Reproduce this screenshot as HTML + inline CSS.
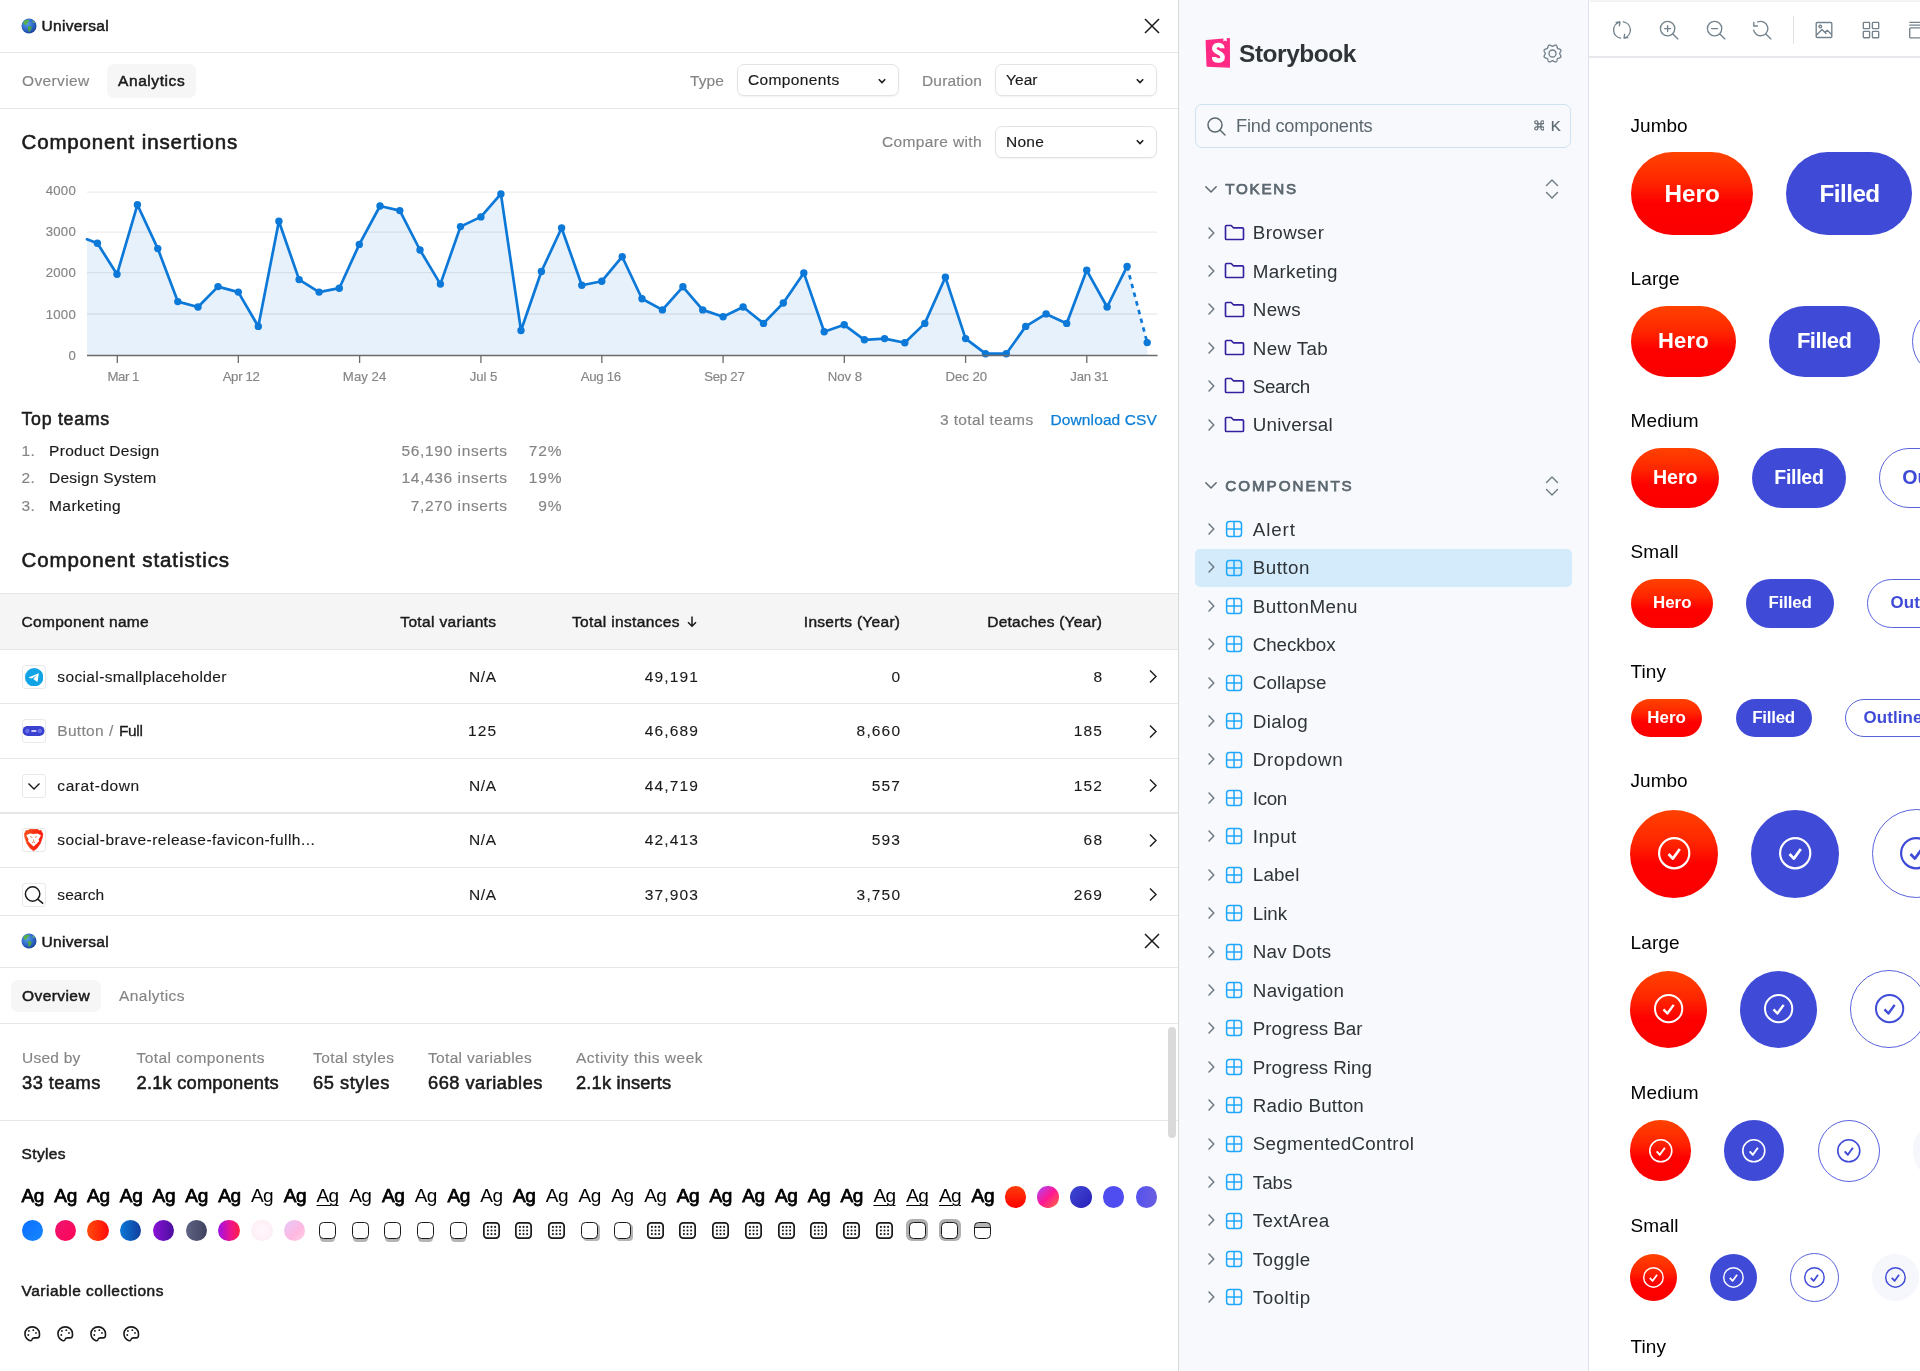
<!DOCTYPE html>
<html><head><meta charset="utf-8"><title>UI</title>
<style>
html,body{margin:0;padding:0;}
body{width:1920px;height:1371px;position:relative;overflow:hidden;background:#fff;font-family:"Liberation Sans",sans-serif;}
.b{position:absolute;display:block;}
.t{position:absolute;white-space:nowrap;display:block;}
#wrap{position:absolute;left:0;top:0;width:1920px;height:1371px;will-change:transform;}
</style></head><body><div id="wrap">
<div class="b" style="left:0px;top:0px;width:1178px;height:1371px;background:#fff;"></div>
<svg class="b" style="left:21.2px;top:17.6px" width="16" height="16" viewBox="0 0 17 17"><defs><radialGradient id="gl" cx="0.38" cy="0.35" r="0.75"><stop offset="0" stop-color="#5aa0e8"/><stop offset="0.6" stop-color="#2a63c4"/><stop offset="1" stop-color="#17388a"/></radialGradient></defs><circle cx="8.5" cy="8.5" r="8" fill="url(#gl)"/><path d="M3.2 3.4c1.6-1.6 4-2 5.4-1.4 .6 1.2-.6 1.8-1.4 2.6-.9 .9-.4 2-1.6 2.6-1.1.5-2-.4-2.9-1.1-.3-1 .0-1.9.5-2.7z" fill="#58b04a"/><path d="M8.2 8.6c1.3-.5 2.7.2 3 1.4.3 1.3-.8 2.2-1.3 3.4-.3.9-.9 1.6-1.6 1.2-.7-.5-.3-1.700-.6-2.6-.3-1-1-2.700.5-3.400z" fill="#4da543"/><path d="M12.300 2.600c1.100.6 2 1.700 2.500 2.800-.8.100-1.700-.200-2.200-.9-.4-.6-.6-1.300-.3-1.900z" fill="#6cbd52"/></svg>
<span class="t" style="left:41.50px;top:16.24px;font-size:15.5px;line-height:19px;color:#1a1a1a;letter-spacing:0.321px;-webkit-text-stroke:0.5px #1a1a1a;">Universal</span>
<svg class="b" style="left:1143px;top:17px" width="18" height="18" viewBox="0 0 18 18"><path d="M2 2L16 16M16 2L2 16" stroke="#1a1a1a" stroke-width="1.5" fill="none"/></svg>
<div class="b" style="left:0px;top:51.8px;width:1178px;height:1.2px;background:#e6e6e6;"></div>
<span class="t" style="left:22.00px;top:70.84px;font-size:15.5px;line-height:19px;color:#858585;letter-spacing:0.363px;-webkit-text-stroke:0.15px #858585;">Overview</span>
<div class="b" style="left:107px;top:64px;width:89px;height:33.5px;background:#f6f6f6;border-radius:7px;"></div>
<span class="t" style="left:118.00px;top:70.84px;font-size:15.5px;line-height:19px;color:#1a1a1a;letter-spacing:0.586px;-webkit-text-stroke:0.5px #1a1a1a;">Analytics</span>
<span class="t" style="left:690.00px;top:70.74px;font-size:15.5px;line-height:19px;color:#858585;letter-spacing:0.099px;-webkit-text-stroke:0.15px #858585;">Type</span>
<div class="b" style="left:736.5px;top:64.2px;width:162.5px;height:32.3px;border:1.3px solid #e3e3e3;border-radius:7px;box-sizing:border-box;background:#fff;box-shadow:0 1px 1.5px rgba(0,0,0,0.05);"></div>
<span class="t" style="left:748.00px;top:70.09px;font-size:15.5px;line-height:19px;color:#1a1a1a;letter-spacing:0.361px;-webkit-text-stroke:0.15px #1a1a1a;">Components</span>
<svg class="b" style="left:877.0px;top:76.85px" width="10" height="8" viewBox="0 0 10 8"><path d="M1.8 2.300L5 5.500L8.200 2.300" stroke="#1a1a1a" stroke-width="1.6" fill="none"/></svg>
<span class="t" style="left:922.00px;top:70.74px;font-size:15.5px;line-height:19px;color:#858585;letter-spacing:0.176px;-webkit-text-stroke:0.15px #858585;">Duration</span>
<div class="b" style="left:994.5px;top:64.2px;width:162.5px;height:32.3px;border:1.3px solid #e3e3e3;border-radius:7px;box-sizing:border-box;background:#fff;box-shadow:0 1px 1.5px rgba(0,0,0,0.05);"></div>
<span class="t" style="left:1006.00px;top:70.09px;font-size:15.5px;line-height:19px;color:#1a1a1a;letter-spacing:0.045px;-webkit-text-stroke:0.15px #1a1a1a;">Year</span>
<svg class="b" style="left:1135.0px;top:76.85px" width="10" height="8" viewBox="0 0 10 8"><path d="M1.8 2.300L5 5.500L8.200 2.300" stroke="#1a1a1a" stroke-width="1.6" fill="none"/></svg>
<div class="b" style="left:0px;top:108px;width:1178px;height:1.2px;background:#e6e6e6;"></div>
<span class="t" style="left:21.50px;top:129.16px;font-size:20.5px;line-height:25px;color:#1a1a1a;letter-spacing:0.854px;-webkit-text-stroke:0.6px #1a1a1a;">Component insertions</span>
<span class="t" style="left:882.00px;top:132.24px;font-size:15.5px;line-height:19px;color:#858585;letter-spacing:0.365px;-webkit-text-stroke:0.15px #858585;">Compare with</span>
<div class="b" style="left:994.5px;top:125.7px;width:162.5px;height:32.3px;border:1.3px solid #e3e3e3;border-radius:7px;box-sizing:border-box;background:#fff;box-shadow:0 1px 1.5px rgba(0,0,0,0.05);"></div>
<span class="t" style="left:1006.00px;top:131.59px;font-size:15.5px;line-height:19px;color:#1a1a1a;letter-spacing:0.235px;-webkit-text-stroke:0.15px #1a1a1a;">None</span>
<svg class="b" style="left:1135.0px;top:138.35px" width="10" height="8" viewBox="0 0 10 8"><path d="M1.8 2.300L5 5.500L8.200 2.300" stroke="#1a1a1a" stroke-width="1.6" fill="none"/></svg>
<svg class="b" style="left:0;top:160px" width="1178" height="240" viewBox="0 160 1178 240"><path d="M87 355.5 L87.0 239.3 L97.4 243.2 L117.0 274.3 L137.4 204.8 L157.8 248.6 L177.8 301.6 L198.0 307.0 L218.0 286.6 L238.3 292.1 L258.3 326.4 L278.9 221.3 L299.1 279.6 L319.1 292.1 L339.3 288.2 L359.3 244.4 L380.0 206.0 L399.8 210.6 L420.0 250.0 L440.4 284.1 L460.5 226.6 L480.9 216.9 L500.9 193.9 L521.0 330.5 L541.4 271.5 L561.6 228.0 L581.8 285.2 L601.8 281.2 L622.2 256.7 L642.0 298.8 L662.4 309.9 L682.9 286.8 L702.7 309.9 L723.1 316.7 L743.1 307.0 L763.5 323.4 L783.3 303.0 L803.8 272.9 L824.2 331.7 L844.2 324.8 L864.4 339.8 L884.6 338.6 L904.8 342.8 L924.8 323.4 L945.4 277.3 L965.6 338.6 L985.5 353.7 L1006.3 353.7 L1025.7 326.4 L1046.1 313.9 L1066.7 323.4 L1086.7 270.3 L1107.1 307.0 L1127.1 266.4 L1147.2 342.6 L1147.2 355.5 Z" fill="#e7f1fb"/><line x1="87" x2="1157.5" y1="192.2" y2="192.2" stroke="#000" stroke-opacity="0.075" stroke-width="1.3"/><line x1="87" x2="1157.5" y1="232.2" y2="232.2" stroke="#000" stroke-opacity="0.075" stroke-width="1.3"/><line x1="87" x2="1157.5" y1="272.7" y2="272.7" stroke="#000" stroke-opacity="0.075" stroke-width="1.3"/><line x1="87" x2="1157.5" y1="314.0" y2="314.0" stroke="#000" stroke-opacity="0.075" stroke-width="1.3"/><path d="M87.0 239.3 L97.4 243.2 L117.0 274.3 L137.4 204.8 L157.8 248.6 L177.8 301.6 L198.0 307.0 L218.0 286.6 L238.3 292.1 L258.3 326.4 L278.9 221.3 L299.1 279.6 L319.1 292.1 L339.3 288.2 L359.3 244.4 L380.0 206.0 L399.8 210.6 L420.0 250.0 L440.4 284.1 L460.5 226.6 L480.9 216.9 L500.9 193.9 L521.0 330.5 L541.4 271.5 L561.6 228.0 L581.8 285.2 L601.8 281.2 L622.2 256.7 L642.0 298.8 L662.4 309.9 L682.9 286.8 L702.7 309.9 L723.1 316.7 L743.1 307.0 L763.5 323.4 L783.3 303.0 L803.8 272.9 L824.2 331.7 L844.2 324.8 L864.4 339.8 L884.6 338.6 L904.8 342.8 L924.8 323.4 L945.4 277.3 L965.6 338.6 L985.5 353.7 L1006.3 353.7 L1025.7 326.4 L1046.1 313.9 L1066.7 323.4 L1086.7 270.3 L1107.1 307.0 L1127.1 266.4" fill="none" stroke="#0c78d8" stroke-width="2.7" stroke-linejoin="round" stroke-linecap="round"/><path d="M1127.1 266.4 L1147.2 342.6" fill="none" stroke="#0c78d8" stroke-width="2.7" stroke-dasharray="4.5 4.5"/><circle cx="97.4" cy="243.2" r="3.7" fill="#0c78d8"/><circle cx="117.0" cy="274.3" r="3.7" fill="#0c78d8"/><circle cx="137.4" cy="204.8" r="3.7" fill="#0c78d8"/><circle cx="157.8" cy="248.6" r="3.7" fill="#0c78d8"/><circle cx="177.8" cy="301.6" r="3.7" fill="#0c78d8"/><circle cx="198.0" cy="307.0" r="3.7" fill="#0c78d8"/><circle cx="218.0" cy="286.6" r="3.7" fill="#0c78d8"/><circle cx="238.3" cy="292.1" r="3.7" fill="#0c78d8"/><circle cx="258.3" cy="326.4" r="3.7" fill="#0c78d8"/><circle cx="278.9" cy="221.3" r="3.7" fill="#0c78d8"/><circle cx="299.1" cy="279.6" r="3.7" fill="#0c78d8"/><circle cx="319.1" cy="292.1" r="3.7" fill="#0c78d8"/><circle cx="339.3" cy="288.2" r="3.7" fill="#0c78d8"/><circle cx="359.3" cy="244.4" r="3.7" fill="#0c78d8"/><circle cx="380.0" cy="206.0" r="3.7" fill="#0c78d8"/><circle cx="399.8" cy="210.6" r="3.7" fill="#0c78d8"/><circle cx="420.0" cy="250.0" r="3.7" fill="#0c78d8"/><circle cx="440.4" cy="284.1" r="3.7" fill="#0c78d8"/><circle cx="460.5" cy="226.6" r="3.7" fill="#0c78d8"/><circle cx="480.9" cy="216.9" r="3.7" fill="#0c78d8"/><circle cx="500.9" cy="193.9" r="3.7" fill="#0c78d8"/><circle cx="521.0" cy="330.5" r="3.7" fill="#0c78d8"/><circle cx="541.4" cy="271.5" r="3.7" fill="#0c78d8"/><circle cx="561.6" cy="228.0" r="3.7" fill="#0c78d8"/><circle cx="581.8" cy="285.2" r="3.7" fill="#0c78d8"/><circle cx="601.8" cy="281.2" r="3.7" fill="#0c78d8"/><circle cx="622.2" cy="256.7" r="3.7" fill="#0c78d8"/><circle cx="642.0" cy="298.8" r="3.7" fill="#0c78d8"/><circle cx="662.4" cy="309.9" r="3.7" fill="#0c78d8"/><circle cx="682.9" cy="286.8" r="3.7" fill="#0c78d8"/><circle cx="702.7" cy="309.9" r="3.7" fill="#0c78d8"/><circle cx="723.1" cy="316.7" r="3.7" fill="#0c78d8"/><circle cx="743.1" cy="307.0" r="3.7" fill="#0c78d8"/><circle cx="763.5" cy="323.4" r="3.7" fill="#0c78d8"/><circle cx="783.3" cy="303.0" r="3.7" fill="#0c78d8"/><circle cx="803.8" cy="272.9" r="3.7" fill="#0c78d8"/><circle cx="824.2" cy="331.7" r="3.7" fill="#0c78d8"/><circle cx="844.2" cy="324.8" r="3.7" fill="#0c78d8"/><circle cx="864.4" cy="339.8" r="3.7" fill="#0c78d8"/><circle cx="884.6" cy="338.6" r="3.7" fill="#0c78d8"/><circle cx="904.8" cy="342.8" r="3.7" fill="#0c78d8"/><circle cx="924.8" cy="323.4" r="3.7" fill="#0c78d8"/><circle cx="945.4" cy="277.3" r="3.7" fill="#0c78d8"/><circle cx="965.6" cy="338.6" r="3.7" fill="#0c78d8"/><circle cx="985.5" cy="353.7" r="3.7" fill="#0c78d8"/><circle cx="1006.3" cy="353.7" r="3.7" fill="#0c78d8"/><circle cx="1025.7" cy="326.4" r="3.7" fill="#0c78d8"/><circle cx="1046.1" cy="313.9" r="3.7" fill="#0c78d8"/><circle cx="1066.7" cy="323.4" r="3.7" fill="#0c78d8"/><circle cx="1086.7" cy="270.3" r="3.7" fill="#0c78d8"/><circle cx="1107.1" cy="307.0" r="3.7" fill="#0c78d8"/><circle cx="1127.1" cy="266.4" r="3.7" fill="#0c78d8"/><circle cx="1147.2" cy="342.6" r="3.7" fill="#0c78d8"/><line x1="87" x2="1157.5" y1="355.5" y2="355.5" stroke="#6b6b6b" stroke-width="1.3"/><line x1="117.3" x2="117.3" y1="355.5" y2="363.0" stroke="#6b6b6b" stroke-width="1.3"/><line x1="238.3" x2="238.3" y1="355.5" y2="363.0" stroke="#6b6b6b" stroke-width="1.3"/><line x1="359.6" x2="359.6" y1="355.5" y2="363.0" stroke="#6b6b6b" stroke-width="1.3"/><line x1="480.9" x2="480.9" y1="355.5" y2="363.0" stroke="#6b6b6b" stroke-width="1.3"/><line x1="601.8" x2="601.8" y1="355.5" y2="363.0" stroke="#6b6b6b" stroke-width="1.3"/><line x1="723.1" x2="723.1" y1="355.5" y2="363.0" stroke="#6b6b6b" stroke-width="1.3"/><line x1="844.3" x2="844.3" y1="355.5" y2="363.0" stroke="#6b6b6b" stroke-width="1.3"/><line x1="965.6" x2="965.6" y1="355.5" y2="363.0" stroke="#6b6b6b" stroke-width="1.3"/><line x1="1086.8" x2="1086.8" y1="355.5" y2="363.0" stroke="#6b6b6b" stroke-width="1.3"/></svg>
<span class="t" style="left:45.69px;top:182.68px;font-size:13.2px;line-height:16px;color:#858585;letter-spacing:0.250px;-webkit-text-stroke:0.15px #858585;">4000</span>
<span class="t" style="left:45.69px;top:224.18px;font-size:13.2px;line-height:16px;color:#858585;letter-spacing:0.250px;-webkit-text-stroke:0.15px #858585;">3000</span>
<span class="t" style="left:45.69px;top:265.28px;font-size:13.2px;line-height:16px;color:#858585;letter-spacing:0.250px;-webkit-text-stroke:0.15px #858585;">2000</span>
<span class="t" style="left:45.69px;top:306.78px;font-size:13.2px;line-height:16px;color:#858585;letter-spacing:0.250px;-webkit-text-stroke:0.15px #858585;">1000</span>
<span class="t" style="left:68.46px;top:348.38px;font-size:13.2px;line-height:16px;color:#858585;letter-spacing:0.250px;-webkit-text-stroke:0.15px #858585;">0</span>
<span class="t" style="left:107.53px;top:369.08px;font-size:13.2px;line-height:16px;color:#858585;letter-spacing:-0.448px;-webkit-text-stroke:0.15px #858585;">Mar 1</span>
<span class="t" style="left:222.64px;top:369.08px;font-size:13.2px;line-height:16px;color:#858585;letter-spacing:-0.314px;-webkit-text-stroke:0.15px #858585;">Apr 12</span>
<span class="t" style="left:342.87px;top:369.08px;font-size:13.2px;line-height:16px;color:#858585;letter-spacing:0.036px;-webkit-text-stroke:0.15px #858585;">May 24</span>
<span class="t" style="left:469.71px;top:369.08px;font-size:13.2px;line-height:16px;color:#858585;letter-spacing:-0.076px;-webkit-text-stroke:0.15px #858585;">Jul 5</span>
<span class="t" style="left:580.85px;top:369.08px;font-size:13.2px;line-height:16px;color:#858585;letter-spacing:-0.304px;-webkit-text-stroke:0.15px #858585;">Aug 16</span>
<span class="t" style="left:704.14px;top:369.08px;font-size:13.2px;line-height:16px;color:#858585;letter-spacing:-0.221px;-webkit-text-stroke:0.15px #858585;">Sep 27</span>
<span class="t" style="left:827.75px;top:369.08px;font-size:13.2px;line-height:16px;color:#858585;-webkit-text-stroke:0.15px #858585;">Nov 8</span>
<span class="t" style="left:945.52px;top:369.08px;font-size:13.2px;line-height:16px;color:#858585;letter-spacing:-0.053px;-webkit-text-stroke:0.15px #858585;">Dec 20</span>
<span class="t" style="left:1070.36px;top:369.08px;font-size:13.2px;line-height:16px;color:#858585;letter-spacing:-0.271px;-webkit-text-stroke:0.15px #858585;">Jan 31</span>
<span class="t" style="left:21.50px;top:409.21px;font-size:17.8px;line-height:21px;color:#1a1a1a;letter-spacing:0.710px;-webkit-text-stroke:0.55px #1a1a1a;">Top teams</span>
<span class="t" style="left:940.00px;top:410.04px;font-size:15.5px;line-height:19px;color:#858585;letter-spacing:0.367px;-webkit-text-stroke:0.15px #858585;">3 total teams</span>
<span class="t" style="left:1050.50px;top:410.04px;font-size:15.5px;line-height:19px;color:#0b7fd6;letter-spacing:0.115px;-webkit-text-stroke:0.25px #0b7fd6;">Download CSV</span>
<span class="t" style="left:21.50px;top:440.84px;font-size:15.5px;line-height:19px;color:#858585;letter-spacing:0.300px;-webkit-text-stroke:0.15px #858585;">1.</span>
<span class="t" style="left:49.00px;top:440.84px;font-size:15.5px;line-height:19px;color:#1a1a1a;letter-spacing:0.323px;-webkit-text-stroke:0.15px #1a1a1a;">Product Design</span>
<span class="t" style="left:401.57px;top:440.84px;font-size:15.5px;line-height:19px;color:#858585;letter-spacing:0.620px;-webkit-text-stroke:0.15px #858585;">56,190 inserts</span>
<span class="t" style="left:528.68px;top:440.84px;font-size:15.5px;line-height:19px;color:#858585;letter-spacing:0.900px;-webkit-text-stroke:0.15px #858585;">72%</span>
<span class="t" style="left:21.50px;top:468.34px;font-size:15.5px;line-height:19px;color:#858585;letter-spacing:0.300px;-webkit-text-stroke:0.15px #858585;">2.</span>
<span class="t" style="left:49.00px;top:468.34px;font-size:15.5px;line-height:19px;color:#1a1a1a;letter-spacing:0.251px;-webkit-text-stroke:0.15px #1a1a1a;">Design System</span>
<span class="t" style="left:401.57px;top:468.34px;font-size:15.5px;line-height:19px;color:#858585;letter-spacing:0.620px;-webkit-text-stroke:0.15px #858585;">14,436 inserts</span>
<span class="t" style="left:528.68px;top:468.34px;font-size:15.5px;line-height:19px;color:#858585;letter-spacing:0.900px;-webkit-text-stroke:0.15px #858585;">19%</span>
<span class="t" style="left:21.50px;top:495.54px;font-size:15.5px;line-height:19px;color:#858585;letter-spacing:0.300px;-webkit-text-stroke:0.15px #858585;">3.</span>
<span class="t" style="left:49.00px;top:495.54px;font-size:15.5px;line-height:19px;color:#1a1a1a;letter-spacing:0.438px;-webkit-text-stroke:0.15px #1a1a1a;">Marketing</span>
<span class="t" style="left:410.81px;top:495.54px;font-size:15.5px;line-height:19px;color:#858585;letter-spacing:0.620px;-webkit-text-stroke:0.15px #858585;">7,270 inserts</span>
<span class="t" style="left:538.20px;top:495.54px;font-size:15.5px;line-height:19px;color:#858585;letter-spacing:0.900px;-webkit-text-stroke:0.15px #858585;">9%</span>
<span class="t" style="left:21.50px;top:547.16px;font-size:20.5px;line-height:25px;color:#1a1a1a;letter-spacing:0.911px;-webkit-text-stroke:0.6px #1a1a1a;">Component statistics</span>
<div class="b" style="left:0px;top:593px;width:1178px;height:56.5px;background:#f5f5f5;border-top:1.5px solid #e6e6e6;border-bottom:1.5px solid #e6e6e6;box-sizing:border-box;"></div>
<span class="t" style="left:21.50px;top:611.54px;font-size:15.5px;line-height:19px;color:#1a1a1a;letter-spacing:0.306px;-webkit-text-stroke:0.45px #1a1a1a;">Component name</span>
<span class="t" style="left:400.33px;top:611.54px;font-size:15.5px;line-height:19px;color:#1a1a1a;letter-spacing:0.334px;-webkit-text-stroke:0.45px #1a1a1a;">Total variants</span>
<span class="t" style="left:571.96px;top:611.54px;font-size:15.5px;line-height:19px;color:#1a1a1a;letter-spacing:0.365px;-webkit-text-stroke:0.45px #1a1a1a;">Total instances</span>
<svg class="b" style="left:685.5px;top:614.5px" width="12" height="13" viewBox="0 0 12 13"><path d="M6 1.500V11M2 7.200L6 11.200L10 7.200" stroke="#1a1a1a" stroke-width="1.5" fill="none"/></svg>
<span class="t" style="left:803.79px;top:611.54px;font-size:15.5px;line-height:19px;color:#1a1a1a;letter-spacing:0.289px;-webkit-text-stroke:0.45px #1a1a1a;">Inserts (Year)</span>
<span class="t" style="left:987.24px;top:611.54px;font-size:15.5px;line-height:19px;color:#1a1a1a;letter-spacing:0.238px;-webkit-text-stroke:0.45px #1a1a1a;">Detaches (Year)</span>
<div class="b" style="left:21.6px;top:664.6px;width:24px;height:24px;border:1.2px solid #e9e9e9;border-radius:3px;box-sizing:border-box;background:#fff;"></div>
<span class="t" style="left:57.30px;top:666.84px;font-size:15.5px;line-height:19px;color:#1a1a1a;letter-spacing:0.369px;-webkit-text-stroke:0.12px #1a1a1a;">social-smallplaceholder</span>
<span class="t" style="left:468.96px;top:666.84px;font-size:15.5px;line-height:19px;color:#1a1a1a;letter-spacing:0.600px;-webkit-text-stroke:0.1px #1a1a1a;">N/A</span>
<span class="t" style="left:644.84px;top:666.84px;font-size:15.5px;line-height:19px;color:#1a1a1a;letter-spacing:1.150px;-webkit-text-stroke:0.1px #1a1a1a;">49,191</span>
<span class="t" style="left:891.38px;top:666.84px;font-size:15.5px;line-height:19px;color:#1a1a1a;letter-spacing:1.150px;-webkit-text-stroke:0.1px #1a1a1a;">0</span>
<span class="t" style="left:1093.38px;top:666.84px;font-size:15.5px;line-height:19px;color:#1a1a1a;letter-spacing:1.150px;-webkit-text-stroke:0.1px #1a1a1a;">8</span>
<svg class="b" style="left:1148px;top:669.1px" width="10" height="15" viewBox="0 0 10 15"><path d="M2 1.500L8 7.500L2 13.500" stroke="#1a1a1a" stroke-width="1.4" fill="none"/></svg>
<div class="b" style="left:0px;top:703.25px;width:1178px;height:1.2px;background:#e6e6e6;"></div>
<div class="b" style="left:21.6px;top:719.15px;width:24px;height:24px;border:1.2px solid #e9e9e9;border-radius:3px;box-sizing:border-box;background:#fff;"></div>
<span class="t" style="left:57.30px;top:721.39px;font-size:15.5px;line-height:19px;color:#858585;letter-spacing:0.281px;-webkit-text-stroke:0.15px #858585;">Button</span>
<span class="t" style="left:109.00px;top:721.39px;font-size:15.5px;line-height:19px;color:#858585;-webkit-text-stroke:0.15px #858585;">/</span>
<span class="t" style="left:119.00px;top:721.39px;font-size:15.5px;line-height:19px;color:#1a1a1a;letter-spacing:-0.370px;-webkit-text-stroke:0.3px #1a1a1a;">Full</span>
<span class="t" style="left:467.94px;top:721.39px;font-size:15.5px;line-height:19px;color:#1a1a1a;letter-spacing:1.100px;-webkit-text-stroke:0.1px #1a1a1a;">125</span>
<span class="t" style="left:644.84px;top:721.39px;font-size:15.5px;line-height:19px;color:#1a1a1a;letter-spacing:1.150px;-webkit-text-stroke:0.1px #1a1a1a;">46,689</span>
<span class="t" style="left:856.61px;top:721.39px;font-size:15.5px;line-height:19px;color:#1a1a1a;letter-spacing:1.150px;-webkit-text-stroke:0.1px #1a1a1a;">8,660</span>
<span class="t" style="left:1073.84px;top:721.39px;font-size:15.5px;line-height:19px;color:#1a1a1a;letter-spacing:1.150px;-webkit-text-stroke:0.1px #1a1a1a;">185</span>
<svg class="b" style="left:1148px;top:723.65px" width="10" height="15" viewBox="0 0 10 15"><path d="M2 1.500L8 7.500L2 13.500" stroke="#1a1a1a" stroke-width="1.4" fill="none"/></svg>
<div class="b" style="left:0px;top:757.8000000000001px;width:1178px;height:1.2px;background:#e6e6e6;"></div>
<div class="b" style="left:21.6px;top:773.7px;width:24px;height:24px;border:1.2px solid #e9e9e9;border-radius:3px;box-sizing:border-box;background:#fff;"></div>
<span class="t" style="left:57.30px;top:775.94px;font-size:15.5px;line-height:19px;color:#1a1a1a;letter-spacing:0.582px;-webkit-text-stroke:0.12px #1a1a1a;">carat-down</span>
<span class="t" style="left:468.96px;top:775.94px;font-size:15.5px;line-height:19px;color:#1a1a1a;letter-spacing:0.600px;-webkit-text-stroke:0.1px #1a1a1a;">N/A</span>
<span class="t" style="left:644.84px;top:775.94px;font-size:15.5px;line-height:19px;color:#1a1a1a;letter-spacing:1.150px;-webkit-text-stroke:0.1px #1a1a1a;">44,719</span>
<span class="t" style="left:871.84px;top:775.94px;font-size:15.5px;line-height:19px;color:#1a1a1a;letter-spacing:1.150px;-webkit-text-stroke:0.1px #1a1a1a;">557</span>
<span class="t" style="left:1073.84px;top:775.94px;font-size:15.5px;line-height:19px;color:#1a1a1a;letter-spacing:1.150px;-webkit-text-stroke:0.1px #1a1a1a;">152</span>
<svg class="b" style="left:1148px;top:778.2px" width="10" height="15" viewBox="0 0 10 15"><path d="M2 1.500L8 7.500L2 13.500" stroke="#1a1a1a" stroke-width="1.4" fill="none"/></svg>
<div class="b" style="left:0px;top:812.35px;width:1178px;height:1.2px;background:#e6e6e6;"></div>
<div class="b" style="left:21.6px;top:828.25px;width:24px;height:24px;border:1.2px solid #e9e9e9;border-radius:3px;box-sizing:border-box;background:#fff;"></div>
<span class="t" style="left:57.30px;top:830.49px;font-size:15.5px;line-height:19px;color:#1a1a1a;letter-spacing:0.477px;-webkit-text-stroke:0.12px #1a1a1a;">social-brave-release-favicon-fullh...</span>
<span class="t" style="left:468.96px;top:830.49px;font-size:15.5px;line-height:19px;color:#1a1a1a;letter-spacing:0.600px;-webkit-text-stroke:0.1px #1a1a1a;">N/A</span>
<span class="t" style="left:644.84px;top:830.49px;font-size:15.5px;line-height:19px;color:#1a1a1a;letter-spacing:1.150px;-webkit-text-stroke:0.1px #1a1a1a;">42,413</span>
<span class="t" style="left:871.84px;top:830.49px;font-size:15.5px;line-height:19px;color:#1a1a1a;letter-spacing:1.150px;-webkit-text-stroke:0.1px #1a1a1a;">593</span>
<span class="t" style="left:1083.61px;top:830.49px;font-size:15.5px;line-height:19px;color:#1a1a1a;letter-spacing:1.150px;-webkit-text-stroke:0.1px #1a1a1a;">68</span>
<svg class="b" style="left:1148px;top:832.75px" width="10" height="15" viewBox="0 0 10 15"><path d="M2 1.500L8 7.500L2 13.500" stroke="#1a1a1a" stroke-width="1.4" fill="none"/></svg>
<div class="b" style="left:0px;top:866.9000000000001px;width:1178px;height:1.2px;background:#e6e6e6;"></div>
<div class="b" style="left:21.6px;top:882.8px;width:24px;height:24px;border:1.2px solid #e9e9e9;border-radius:3px;box-sizing:border-box;background:#fff;"></div>
<span class="t" style="left:57.30px;top:885.04px;font-size:15.5px;line-height:19px;color:#1a1a1a;letter-spacing:0.079px;-webkit-text-stroke:0.12px #1a1a1a;">search</span>
<span class="t" style="left:468.96px;top:885.04px;font-size:15.5px;line-height:19px;color:#1a1a1a;letter-spacing:0.600px;-webkit-text-stroke:0.1px #1a1a1a;">N/A</span>
<span class="t" style="left:644.84px;top:885.04px;font-size:15.5px;line-height:19px;color:#1a1a1a;letter-spacing:1.150px;-webkit-text-stroke:0.1px #1a1a1a;">37,903</span>
<span class="t" style="left:856.61px;top:885.04px;font-size:15.5px;line-height:19px;color:#1a1a1a;letter-spacing:1.150px;-webkit-text-stroke:0.1px #1a1a1a;">3,750</span>
<span class="t" style="left:1073.84px;top:885.04px;font-size:15.5px;line-height:19px;color:#1a1a1a;letter-spacing:1.150px;-webkit-text-stroke:0.1px #1a1a1a;">269</span>
<svg class="b" style="left:1148px;top:887.3px" width="10" height="15" viewBox="0 0 10 15"><path d="M2 1.500L8 7.500L2 13.500" stroke="#1a1a1a" stroke-width="1.4" fill="none"/></svg>
<svg class="b" style="left:24.5px;top:667.5px" width="18.400" height="18.400" viewBox="0 0 18.400 18.400"><circle cx="9.200" cy="9.200" r="9.200" fill="#10a4e6"/><path d="M3.300 9.400L13.900 5.200L12.500 13.900L8.300 11L11.800 7.300L6.600 10.400Z" fill="#fff"/><path d="M8.300 11L11.800 7.300L8.900 10Z" fill="#bfe6f8"/></svg>
<svg class="b" style="left:22px;top:725.15px" width="24" height="12" viewBox="0 0 24 12"><rect x="0.700" y="0.900" width="21.800" height="10" rx="5" fill="#3a40d0"/><circle cx="5.400" cy="5.900" r="1.700" fill="#5f66e6" stroke="#7f86f0" stroke-width="0.700"/><circle cx="17.800" cy="5.900" r="1.700" fill="#5f66e6" stroke="#7f86f0" stroke-width="0.700"/><rect x="9.300" y="5" width="5.200" height="1.900" rx="0.600" fill="#c8cbf8"/></svg>
<svg class="b" style="left:26.5px;top:781.7px" width="14" height="9" viewBox="0 0 14 9"><path d="M1.500 1.500L7 7L12.500 1.500" stroke="#1a1a1a" stroke-width="1.400" fill="none"/></svg>
<svg class="b" style="left:24px;top:829.35px" width="20" height="23" viewBox="0 0 20 23"><defs><linearGradient id="bg1" x1="0" y1="0" x2="1" y2="0.300"><stop offset="0" stop-color="#f5521c"/><stop offset="0.550" stop-color="#f9300f"/><stop offset="1" stop-color="#fb1a0a"/></linearGradient></defs><path d="M6 0.300L13.200 0.300L15.400 1.600L17 1.300L18.900 5L18.300 8.600L16.200 14.800L13 19.200L9.600 21.800L6.200 19.200L3 14.800L0.900 8.600L0.300 5L2.200 1.300L3.800 1.600Z" fill="url(#bg1)" stroke="url(#bg1)" stroke-width="0.600" stroke-linejoin="round"/><path d="M2.200 6.200L5.800 4.500L9.600 5.100L13.400 4.500L17 6.200L14.600 10.600L15.200 12L12.900 14.600L9.600 17.400L6.300 14.600L4 12L4.600 10.600Z" fill="#fff"/><path d="M6.300 7.600L8.400 8.500M12.900 7.600L10.800 8.500M8 13.900L9.600 12.800L11.200 13.900" stroke="#e8572e" stroke-width="0.800" fill="none"/><path d="M9.600 9.800L8.700 12.400L10.500 12.400Z" fill="#f7a07e"/></svg>
<svg class="b" style="left:23.5px;top:884.8px" width="21" height="21" viewBox="0 0 21 21"><circle cx="8.600" cy="9" r="7.200" stroke="#1a1a1a" stroke-width="1.500" fill="none"/><path d="M13.700 14.100L19.200 18.600" stroke="#1a1a1a" stroke-width="1.500"/></svg>
<div class="b" style="left:0px;top:914.6px;width:1178px;height:457px;background:#fff;"></div>
<div class="b" style="left:0px;top:914.8px;width:1178px;height:1.2px;background:#e6e6e6;"></div>
<svg class="b" style="left:21.2px;top:933.1px" width="16" height="16" viewBox="0 0 17 17"><defs><radialGradient id="gl" cx="0.38" cy="0.35" r="0.75"><stop offset="0" stop-color="#5aa0e8"/><stop offset="0.6" stop-color="#2a63c4"/><stop offset="1" stop-color="#17388a"/></radialGradient></defs><circle cx="8.5" cy="8.5" r="8" fill="url(#gl)"/><path d="M3.2 3.4c1.6-1.6 4-2 5.4-1.4 .6 1.2-.6 1.8-1.4 2.6-.9 .9-.4 2-1.6 2.6-1.1.5-2-.4-2.9-1.1-.3-1 .0-1.9.5-2.7z" fill="#58b04a"/><path d="M8.2 8.6c1.3-.5 2.7.2 3 1.4.3 1.3-.8 2.2-1.3 3.4-.3.9-.9 1.6-1.6 1.2-.7-.5-.3-1.700-.6-2.6-.3-1-1-2.700.5-3.400z" fill="#4da543"/><path d="M12.300 2.600c1.100.6 2 1.700 2.500 2.800-.8.100-1.700-.200-2.200-.9-.4-.6-.6-1.300-.3-1.900z" fill="#6cbd52"/></svg>
<span class="t" style="left:41.50px;top:931.74px;font-size:15.5px;line-height:19px;color:#1a1a1a;letter-spacing:0.321px;-webkit-text-stroke:0.5px #1a1a1a;">Universal</span>
<svg class="b" style="left:1143px;top:932px" width="18" height="18" viewBox="0 0 18 18"><path d="M2 2L16 16M16 2L2 16" stroke="#1a1a1a" stroke-width="1.5" fill="none"/></svg>
<div class="b" style="left:0px;top:967.2px;width:1178px;height:1.2px;background:#e6e6e6;"></div>
<div class="b" style="left:11px;top:979.5px;width:90px;height:32.5px;background:#f6f6f6;border-radius:7px;"></div>
<span class="t" style="left:22.00px;top:986.24px;font-size:15.5px;line-height:19px;color:#1a1a1a;letter-spacing:0.425px;-webkit-text-stroke:0.5px #1a1a1a;">Overview</span>
<span class="t" style="left:119.00px;top:986.24px;font-size:15.5px;line-height:19px;color:#858585;letter-spacing:0.441px;-webkit-text-stroke:0.15px #858585;">Analytics</span>
<div class="b" style="left:0px;top:1023.3px;width:1178px;height:1.2px;background:#e6e6e6;"></div>
<span class="t" style="left:22.00px;top:1047.74px;font-size:15.5px;line-height:19px;color:#858585;letter-spacing:0.234px;-webkit-text-stroke:0.15px #858585;">Used by</span>
<span class="t" style="left:22.00px;top:1071.70px;font-size:18.3px;line-height:22px;color:#1a1a1a;letter-spacing:0.466px;-webkit-text-stroke:0.55px #1a1a1a;">33 teams</span>
<span class="t" style="left:136.50px;top:1047.74px;font-size:15.5px;line-height:19px;color:#858585;letter-spacing:0.438px;-webkit-text-stroke:0.15px #858585;">Total components</span>
<span class="t" style="left:136.50px;top:1071.70px;font-size:18.3px;line-height:22px;color:#1a1a1a;letter-spacing:0.210px;-webkit-text-stroke:0.55px #1a1a1a;">2.1k components</span>
<span class="t" style="left:313.00px;top:1047.74px;font-size:15.5px;line-height:19px;color:#858585;letter-spacing:0.403px;-webkit-text-stroke:0.15px #858585;">Total styles</span>
<span class="t" style="left:313.00px;top:1071.70px;font-size:18.3px;line-height:22px;color:#1a1a1a;letter-spacing:0.532px;-webkit-text-stroke:0.55px #1a1a1a;">65 styles</span>
<span class="t" style="left:428.00px;top:1047.74px;font-size:15.5px;line-height:19px;color:#858585;letter-spacing:0.328px;-webkit-text-stroke:0.15px #858585;">Total variables</span>
<span class="t" style="left:428.00px;top:1071.70px;font-size:18.3px;line-height:22px;color:#1a1a1a;letter-spacing:0.474px;-webkit-text-stroke:0.55px #1a1a1a;">668 variables</span>
<span class="t" style="left:576.00px;top:1047.74px;font-size:15.5px;line-height:19px;color:#858585;letter-spacing:0.500px;-webkit-text-stroke:0.15px #858585;">Activity this week</span>
<span class="t" style="left:576.00px;top:1071.70px;font-size:18.3px;line-height:22px;color:#1a1a1a;letter-spacing:0.161px;-webkit-text-stroke:0.55px #1a1a1a;">2.1k inserts</span>
<div class="b" style="left:0px;top:1119.8px;width:1178px;height:1.2px;background:#e6e6e6;"></div>
<div class="b" style="left:1168px;top:1027px;width:8px;height:111px;background:#dadada;border-radius:4px;"></div>
<span class="t" style="left:21.50px;top:1144.24px;font-size:15.5px;line-height:19px;color:#1a1a1a;letter-spacing:0.382px;-webkit-text-stroke:0.5px #1a1a1a;">Styles</span>
<span class="t" style="left:21.57px;top:1184.19px;font-size:19px;line-height:23px;color:#000;letter-spacing:-0.369px;-webkit-text-stroke:0.75px #000;">Ag</span>
<span class="t" style="left:54.33px;top:1184.19px;font-size:19px;line-height:23px;color:#000;letter-spacing:-0.369px;-webkit-text-stroke:0.75px #000;">Ag</span>
<span class="t" style="left:87.09px;top:1184.19px;font-size:19px;line-height:23px;color:#000;letter-spacing:-0.369px;-webkit-text-stroke:0.75px #000;">Ag</span>
<span class="t" style="left:119.85px;top:1184.19px;font-size:19px;line-height:23px;color:#000;letter-spacing:-0.369px;-webkit-text-stroke:0.75px #000;">Ag</span>
<span class="t" style="left:152.61px;top:1184.19px;font-size:19px;line-height:23px;color:#000;letter-spacing:-0.369px;-webkit-text-stroke:0.75px #000;">Ag</span>
<span class="t" style="left:185.37px;top:1184.19px;font-size:19px;line-height:23px;color:#000;letter-spacing:-0.369px;-webkit-text-stroke:0.75px #000;">Ag</span>
<span class="t" style="left:218.13px;top:1184.19px;font-size:19px;line-height:23px;color:#000;letter-spacing:-0.369px;-webkit-text-stroke:0.75px #000;">Ag</span>
<span class="t" style="left:251.01px;top:1184.19px;font-size:19px;line-height:23px;color:#000;letter-spacing:-0.619px;">Ag</span>
<span class="t" style="left:283.65px;top:1184.19px;font-size:19px;line-height:23px;color:#000;letter-spacing:-0.369px;-webkit-text-stroke:0.75px #000;">Ag</span>
<span class="t" style="left:316.53px;top:1184.19px;font-size:19px;line-height:23px;color:#000;letter-spacing:-0.619px;text-decoration:underline;text-decoration-thickness:1.2px;text-underline-offset:2.5px;">Ag</span>
<span class="t" style="left:349.29px;top:1184.19px;font-size:19px;line-height:23px;color:#000;letter-spacing:-0.619px;">Ag</span>
<span class="t" style="left:381.93px;top:1184.19px;font-size:19px;line-height:23px;color:#000;letter-spacing:-0.369px;-webkit-text-stroke:0.75px #000;">Ag</span>
<span class="t" style="left:414.81px;top:1184.19px;font-size:19px;line-height:23px;color:#000;letter-spacing:-0.619px;">Ag</span>
<span class="t" style="left:447.45px;top:1184.19px;font-size:19px;line-height:23px;color:#000;letter-spacing:-0.369px;-webkit-text-stroke:0.75px #000;">Ag</span>
<span class="t" style="left:480.33px;top:1184.19px;font-size:19px;line-height:23px;color:#000;letter-spacing:-0.619px;">Ag</span>
<span class="t" style="left:512.97px;top:1184.19px;font-size:19px;line-height:23px;color:#000;letter-spacing:-0.369px;-webkit-text-stroke:0.75px #000;">Ag</span>
<span class="t" style="left:545.85px;top:1184.19px;font-size:19px;line-height:23px;color:#000;letter-spacing:-0.619px;">Ag</span>
<span class="t" style="left:578.61px;top:1184.19px;font-size:19px;line-height:23px;color:#000;letter-spacing:-0.619px;">Ag</span>
<span class="t" style="left:611.37px;top:1184.19px;font-size:19px;line-height:23px;color:#000;letter-spacing:-0.619px;">Ag</span>
<span class="t" style="left:644.13px;top:1184.19px;font-size:19px;line-height:23px;color:#000;letter-spacing:-0.619px;">Ag</span>
<span class="t" style="left:676.77px;top:1184.19px;font-size:19px;line-height:23px;color:#000;letter-spacing:-0.369px;-webkit-text-stroke:0.75px #000;">Ag</span>
<span class="t" style="left:709.53px;top:1184.19px;font-size:19px;line-height:23px;color:#000;letter-spacing:-0.369px;-webkit-text-stroke:0.75px #000;">Ag</span>
<span class="t" style="left:742.29px;top:1184.19px;font-size:19px;line-height:23px;color:#000;letter-spacing:-0.369px;-webkit-text-stroke:0.75px #000;">Ag</span>
<span class="t" style="left:775.05px;top:1184.19px;font-size:19px;line-height:23px;color:#000;letter-spacing:-0.369px;-webkit-text-stroke:0.75px #000;">Ag</span>
<span class="t" style="left:807.81px;top:1184.19px;font-size:19px;line-height:23px;color:#000;letter-spacing:-0.369px;-webkit-text-stroke:0.75px #000;">Ag</span>
<span class="t" style="left:840.57px;top:1184.19px;font-size:19px;line-height:23px;color:#000;letter-spacing:-0.369px;-webkit-text-stroke:0.75px #000;">Ag</span>
<span class="t" style="left:873.45px;top:1184.19px;font-size:19px;line-height:23px;color:#000;letter-spacing:-0.619px;text-decoration:underline;text-decoration-thickness:1.2px;text-underline-offset:2.5px;">Ag</span>
<span class="t" style="left:906.21px;top:1184.19px;font-size:19px;line-height:23px;color:#000;letter-spacing:-0.619px;text-decoration:underline;text-decoration-thickness:1.2px;text-underline-offset:2.5px;">Ag</span>
<span class="t" style="left:938.97px;top:1184.19px;font-size:19px;line-height:23px;color:#000;letter-spacing:-0.619px;text-decoration:underline;text-decoration-thickness:1.2px;text-underline-offset:2.5px;">Ag</span>
<span class="t" style="left:971.61px;top:1184.19px;font-size:19px;line-height:23px;color:#000;letter-spacing:-0.369px;-webkit-text-stroke:0.75px #000;">Ag</span>
<div class="b" style="left:1004.5999999999999px;top:1186.3px;width:21.4px;height:21.4px;border-radius:50%;background:linear-gradient(180deg,#ff3d0a,#ff0000);"></div>
<div class="b" style="left:1037.36px;top:1186.3px;width:21.4px;height:21.4px;border-radius:50%;background:linear-gradient(135deg,#a54cff 0%,#ff1893 50%,#ff6a3c 100%);"></div>
<div class="b" style="left:1070.12px;top:1186.3px;width:21.4px;height:21.4px;border-radius:50%;background:linear-gradient(135deg,#3f49d4,#2a1fb8);"></div>
<div class="b" style="left:1102.8799999999999px;top:1186.3px;width:21.4px;height:21.4px;border-radius:50%;background:#4f4cf0;"></div>
<div class="b" style="left:1135.6399999999999px;top:1186.3px;width:21.4px;height:21.4px;border-radius:50%;background:linear-gradient(90deg,#5552ee,#6a5ee0);"></div>
<div class="b" style="left:21.8px;top:1219.5px;width:21.4px;height:21.4px;border-radius:50%;background:linear-gradient(135deg,#0a6eff,#1688ff);"></div>
<div class="b" style="left:54.55999999999999px;top:1219.5px;width:21.4px;height:21.4px;border-radius:50%;background:linear-gradient(135deg,#ee1470,#ff0558);"></div>
<div class="b" style="left:87.32px;top:1219.5px;width:21.4px;height:21.4px;border-radius:50%;background:linear-gradient(90deg,#ff4d0a,#ff0a0a);"></div>
<div class="b" style="left:120.08px;top:1219.5px;width:21.4px;height:21.4px;border-radius:50%;background:linear-gradient(90deg,#0a78d6,#123f9e);"></div>
<div class="b" style="left:152.84px;top:1219.5px;width:21.4px;height:21.4px;border-radius:50%;background:linear-gradient(90deg,#8a12d6,#4a0f9e);"></div>
<div class="b" style="left:185.6px;top:1219.5px;width:21.4px;height:21.4px;border-radius:50%;background:linear-gradient(90deg,#5f6385,#3f425e);"></div>
<div class="b" style="left:218.36px;top:1219.5px;width:21.4px;height:21.4px;border-radius:50%;background:linear-gradient(90deg,#9a12e6 0%,#f0148a 60%,#ff2040 100%);"></div>
<div class="b" style="left:251.12px;top:1219.5px;width:21.4px;height:21.4px;border-radius:50%;background:radial-gradient(circle,#fff5fa 30%,#fde9f3 100%);"></div>
<div class="b" style="left:283.88px;top:1219.5px;width:21.4px;height:21.4px;border-radius:50%;background:linear-gradient(135deg,#e6c8fa,#ffb8e0 60%,#ffd0e6);"></div>
<div class="b" style="left:319.9px;top:1225.8px;width:15px;height:16px;border-radius:4px;background:#b5b5b5;"></div>
<div class="b" style="left:318.9px;top:1221.8px;width:17px;height:17px;border-radius:4.5px;border:1.7px solid #1a1a1a;box-sizing:border-box;background:#fff;"></div>
<div class="b" style="left:352.65999999999997px;top:1225.8px;width:15px;height:16px;border-radius:4px;background:#b5b5b5;"></div>
<div class="b" style="left:351.65999999999997px;top:1221.8px;width:17px;height:17px;border-radius:4.5px;border:1.7px solid #1a1a1a;box-sizing:border-box;background:#fff;"></div>
<div class="b" style="left:385.41999999999996px;top:1225.8px;width:15px;height:16px;border-radius:4px;background:#b5b5b5;"></div>
<div class="b" style="left:384.41999999999996px;top:1221.8px;width:17px;height:17px;border-radius:4.5px;border:1.7px solid #1a1a1a;box-sizing:border-box;background:#fff;"></div>
<div class="b" style="left:418.17999999999995px;top:1225.8px;width:15px;height:16px;border-radius:4px;background:#b5b5b5;"></div>
<div class="b" style="left:417.17999999999995px;top:1221.8px;width:17px;height:17px;border-radius:4.5px;border:1.7px solid #1a1a1a;box-sizing:border-box;background:#fff;"></div>
<div class="b" style="left:450.93999999999994px;top:1225.8px;width:15px;height:16px;border-radius:4px;background:#b5b5b5;"></div>
<div class="b" style="left:449.93999999999994px;top:1221.8px;width:17px;height:17px;border-radius:4.5px;border:1.7px solid #1a1a1a;box-sizing:border-box;background:#fff;"></div>
<svg class="b" style="left:482.69999999999993px;top:1221.8px" width="17" height="17" viewBox="0 0 17 17"><rect x="0.85" y="0.85" width="15.300" height="15.300" rx="3.300" fill="#fff" stroke="#1a1a1a" stroke-width="1.700"/><circle cx="4.9" cy="4.9" r="1.05" fill="#1a1a1a"/><circle cx="4.9" cy="8.5" r="1.05" fill="#1a1a1a"/><circle cx="4.9" cy="12.100000000000001" r="1.05" fill="#1a1a1a"/><circle cx="8.5" cy="4.9" r="1.05" fill="#1a1a1a"/><circle cx="8.5" cy="8.5" r="1.05" fill="#1a1a1a"/><circle cx="8.5" cy="12.100000000000001" r="1.05" fill="#1a1a1a"/><circle cx="12.100000000000001" cy="4.9" r="1.05" fill="#1a1a1a"/><circle cx="12.100000000000001" cy="8.5" r="1.05" fill="#1a1a1a"/><circle cx="12.100000000000001" cy="12.100000000000001" r="1.05" fill="#1a1a1a"/></svg>
<svg class="b" style="left:515.46px;top:1221.8px" width="17" height="17" viewBox="0 0 17 17"><rect x="0.85" y="0.85" width="15.300" height="15.300" rx="3.300" fill="#fff" stroke="#1a1a1a" stroke-width="1.700"/><circle cx="4.9" cy="4.9" r="1.05" fill="#1a1a1a"/><circle cx="4.9" cy="8.5" r="1.05" fill="#1a1a1a"/><circle cx="4.9" cy="12.100000000000001" r="1.05" fill="#1a1a1a"/><circle cx="8.5" cy="4.9" r="1.05" fill="#1a1a1a"/><circle cx="8.5" cy="8.5" r="1.05" fill="#1a1a1a"/><circle cx="8.5" cy="12.100000000000001" r="1.05" fill="#1a1a1a"/><circle cx="12.100000000000001" cy="4.9" r="1.05" fill="#1a1a1a"/><circle cx="12.100000000000001" cy="8.5" r="1.05" fill="#1a1a1a"/><circle cx="12.100000000000001" cy="12.100000000000001" r="1.05" fill="#1a1a1a"/></svg>
<svg class="b" style="left:548.22px;top:1221.8px" width="17" height="17" viewBox="0 0 17 17"><rect x="0.85" y="0.85" width="15.300" height="15.300" rx="3.300" fill="#fff" stroke="#1a1a1a" stroke-width="1.700"/><circle cx="4.9" cy="4.9" r="1.05" fill="#1a1a1a"/><circle cx="4.9" cy="8.5" r="1.05" fill="#1a1a1a"/><circle cx="4.9" cy="12.100000000000001" r="1.05" fill="#1a1a1a"/><circle cx="8.5" cy="4.9" r="1.05" fill="#1a1a1a"/><circle cx="8.5" cy="8.5" r="1.05" fill="#1a1a1a"/><circle cx="8.5" cy="12.100000000000001" r="1.05" fill="#1a1a1a"/><circle cx="12.100000000000001" cy="4.9" r="1.05" fill="#1a1a1a"/><circle cx="12.100000000000001" cy="8.5" r="1.05" fill="#1a1a1a"/><circle cx="12.100000000000001" cy="12.100000000000001" r="1.05" fill="#1a1a1a"/></svg>
<div class="b" style="left:583.48px;top:1224.3px;width:17px;height:17px;border-radius:4px;background:#b5b5b5;"></div>
<div class="b" style="left:580.98px;top:1221.8px;width:17px;height:17px;border-radius:4.5px;border:1.7px solid #1a1a1a;box-sizing:border-box;background:#fff;"></div>
<div class="b" style="left:616.24px;top:1224.3px;width:17px;height:17px;border-radius:4px;background:#b5b5b5;"></div>
<div class="b" style="left:613.74px;top:1221.8px;width:17px;height:17px;border-radius:4.5px;border:1.7px solid #1a1a1a;box-sizing:border-box;background:#fff;"></div>
<svg class="b" style="left:646.5px;top:1221.8px" width="17" height="17" viewBox="0 0 17 17"><rect x="0.85" y="0.85" width="15.300" height="15.300" rx="3.300" fill="#fff" stroke="#1a1a1a" stroke-width="1.700"/><circle cx="4.9" cy="4.9" r="1.05" fill="#1a1a1a"/><circle cx="4.9" cy="8.5" r="1.05" fill="#1a1a1a"/><circle cx="4.9" cy="12.100000000000001" r="1.05" fill="#1a1a1a"/><circle cx="8.5" cy="4.9" r="1.05" fill="#1a1a1a"/><circle cx="8.5" cy="8.5" r="1.05" fill="#1a1a1a"/><circle cx="8.5" cy="12.100000000000001" r="1.05" fill="#1a1a1a"/><circle cx="12.100000000000001" cy="4.9" r="1.05" fill="#1a1a1a"/><circle cx="12.100000000000001" cy="8.5" r="1.05" fill="#1a1a1a"/><circle cx="12.100000000000001" cy="12.100000000000001" r="1.05" fill="#1a1a1a"/></svg>
<svg class="b" style="left:679.26px;top:1221.8px" width="17" height="17" viewBox="0 0 17 17"><rect x="0.85" y="0.85" width="15.300" height="15.300" rx="3.300" fill="#fff" stroke="#1a1a1a" stroke-width="1.700"/><circle cx="4.9" cy="4.9" r="1.05" fill="#1a1a1a"/><circle cx="4.9" cy="8.5" r="1.05" fill="#1a1a1a"/><circle cx="4.9" cy="12.100000000000001" r="1.05" fill="#1a1a1a"/><circle cx="8.5" cy="4.9" r="1.05" fill="#1a1a1a"/><circle cx="8.5" cy="8.5" r="1.05" fill="#1a1a1a"/><circle cx="8.5" cy="12.100000000000001" r="1.05" fill="#1a1a1a"/><circle cx="12.100000000000001" cy="4.9" r="1.05" fill="#1a1a1a"/><circle cx="12.100000000000001" cy="8.5" r="1.05" fill="#1a1a1a"/><circle cx="12.100000000000001" cy="12.100000000000001" r="1.05" fill="#1a1a1a"/></svg>
<svg class="b" style="left:712.02px;top:1221.8px" width="17" height="17" viewBox="0 0 17 17"><rect x="0.85" y="0.85" width="15.300" height="15.300" rx="3.300" fill="#fff" stroke="#1a1a1a" stroke-width="1.700"/><circle cx="4.9" cy="4.9" r="1.05" fill="#1a1a1a"/><circle cx="4.9" cy="8.5" r="1.05" fill="#1a1a1a"/><circle cx="4.9" cy="12.100000000000001" r="1.05" fill="#1a1a1a"/><circle cx="8.5" cy="4.9" r="1.05" fill="#1a1a1a"/><circle cx="8.5" cy="8.5" r="1.05" fill="#1a1a1a"/><circle cx="8.5" cy="12.100000000000001" r="1.05" fill="#1a1a1a"/><circle cx="12.100000000000001" cy="4.9" r="1.05" fill="#1a1a1a"/><circle cx="12.100000000000001" cy="8.5" r="1.05" fill="#1a1a1a"/><circle cx="12.100000000000001" cy="12.100000000000001" r="1.05" fill="#1a1a1a"/></svg>
<svg class="b" style="left:744.78px;top:1221.8px" width="17" height="17" viewBox="0 0 17 17"><rect x="0.85" y="0.85" width="15.300" height="15.300" rx="3.300" fill="#fff" stroke="#1a1a1a" stroke-width="1.700"/><circle cx="4.9" cy="4.9" r="1.05" fill="#1a1a1a"/><circle cx="4.9" cy="8.5" r="1.05" fill="#1a1a1a"/><circle cx="4.9" cy="12.100000000000001" r="1.05" fill="#1a1a1a"/><circle cx="8.5" cy="4.9" r="1.05" fill="#1a1a1a"/><circle cx="8.5" cy="8.5" r="1.05" fill="#1a1a1a"/><circle cx="8.5" cy="12.100000000000001" r="1.05" fill="#1a1a1a"/><circle cx="12.100000000000001" cy="4.9" r="1.05" fill="#1a1a1a"/><circle cx="12.100000000000001" cy="8.5" r="1.05" fill="#1a1a1a"/><circle cx="12.100000000000001" cy="12.100000000000001" r="1.05" fill="#1a1a1a"/></svg>
<svg class="b" style="left:777.54px;top:1221.8px" width="17" height="17" viewBox="0 0 17 17"><rect x="0.85" y="0.85" width="15.300" height="15.300" rx="3.300" fill="#fff" stroke="#1a1a1a" stroke-width="1.700"/><circle cx="4.9" cy="4.9" r="1.05" fill="#1a1a1a"/><circle cx="4.9" cy="8.5" r="1.05" fill="#1a1a1a"/><circle cx="4.9" cy="12.100000000000001" r="1.05" fill="#1a1a1a"/><circle cx="8.5" cy="4.9" r="1.05" fill="#1a1a1a"/><circle cx="8.5" cy="8.5" r="1.05" fill="#1a1a1a"/><circle cx="8.5" cy="12.100000000000001" r="1.05" fill="#1a1a1a"/><circle cx="12.100000000000001" cy="4.9" r="1.05" fill="#1a1a1a"/><circle cx="12.100000000000001" cy="8.5" r="1.05" fill="#1a1a1a"/><circle cx="12.100000000000001" cy="12.100000000000001" r="1.05" fill="#1a1a1a"/></svg>
<svg class="b" style="left:810.3px;top:1221.8px" width="17" height="17" viewBox="0 0 17 17"><rect x="0.85" y="0.85" width="15.300" height="15.300" rx="3.300" fill="#fff" stroke="#1a1a1a" stroke-width="1.700"/><circle cx="4.9" cy="4.9" r="1.05" fill="#1a1a1a"/><circle cx="4.9" cy="8.5" r="1.05" fill="#1a1a1a"/><circle cx="4.9" cy="12.100000000000001" r="1.05" fill="#1a1a1a"/><circle cx="8.5" cy="4.9" r="1.05" fill="#1a1a1a"/><circle cx="8.5" cy="8.5" r="1.05" fill="#1a1a1a"/><circle cx="8.5" cy="12.100000000000001" r="1.05" fill="#1a1a1a"/><circle cx="12.100000000000001" cy="4.9" r="1.05" fill="#1a1a1a"/><circle cx="12.100000000000001" cy="8.5" r="1.05" fill="#1a1a1a"/><circle cx="12.100000000000001" cy="12.100000000000001" r="1.05" fill="#1a1a1a"/></svg>
<svg class="b" style="left:843.06px;top:1221.8px" width="17" height="17" viewBox="0 0 17 17"><rect x="0.85" y="0.85" width="15.300" height="15.300" rx="3.300" fill="#fff" stroke="#1a1a1a" stroke-width="1.700"/><circle cx="4.9" cy="4.9" r="1.05" fill="#1a1a1a"/><circle cx="4.9" cy="8.5" r="1.05" fill="#1a1a1a"/><circle cx="4.9" cy="12.100000000000001" r="1.05" fill="#1a1a1a"/><circle cx="8.5" cy="4.9" r="1.05" fill="#1a1a1a"/><circle cx="8.5" cy="8.5" r="1.05" fill="#1a1a1a"/><circle cx="8.5" cy="12.100000000000001" r="1.05" fill="#1a1a1a"/><circle cx="12.100000000000001" cy="4.9" r="1.05" fill="#1a1a1a"/><circle cx="12.100000000000001" cy="8.5" r="1.05" fill="#1a1a1a"/><circle cx="12.100000000000001" cy="12.100000000000001" r="1.05" fill="#1a1a1a"/></svg>
<svg class="b" style="left:875.8199999999999px;top:1221.8px" width="17" height="17" viewBox="0 0 17 17"><rect x="0.85" y="0.85" width="15.300" height="15.300" rx="3.300" fill="#fff" stroke="#1a1a1a" stroke-width="1.700"/><circle cx="4.9" cy="4.9" r="1.05" fill="#1a1a1a"/><circle cx="4.9" cy="8.5" r="1.05" fill="#1a1a1a"/><circle cx="4.9" cy="12.100000000000001" r="1.05" fill="#1a1a1a"/><circle cx="8.5" cy="4.9" r="1.05" fill="#1a1a1a"/><circle cx="8.5" cy="8.5" r="1.05" fill="#1a1a1a"/><circle cx="8.5" cy="12.100000000000001" r="1.05" fill="#1a1a1a"/><circle cx="12.100000000000001" cy="4.9" r="1.05" fill="#1a1a1a"/><circle cx="12.100000000000001" cy="8.5" r="1.05" fill="#1a1a1a"/><circle cx="12.100000000000001" cy="12.100000000000001" r="1.05" fill="#1a1a1a"/></svg>
<div class="b" style="left:906.0799999999999px;top:1219.3px;width:22px;height:22px;border-radius:6px;background:#b0b0b0;"></div>
<div class="b" style="left:908.5799999999999px;top:1221.8px;width:17px;height:17px;border-radius:4.5px;border:1.7px solid #1a1a1a;box-sizing:border-box;background:#fff;"></div>
<div class="b" style="left:938.8399999999999px;top:1219.3px;width:22px;height:22px;border-radius:6px;background:#b0b0b0;"></div>
<div class="b" style="left:941.3399999999999px;top:1221.8px;width:17px;height:17px;border-radius:4.5px;border:1.7px solid #1a1a1a;box-sizing:border-box;background:#fff;"></div>
<div class="b" style="left:974.0999999999999px;top:1221.8px;width:17px;height:17px;border-radius:4.5px;border:1.7px solid #1a1a1a;box-sizing:border-box;background:linear-gradient(180deg,#b5b5b5 0,#b5b5b5 3.5px,#1a1a1a 3.5px,#1a1a1a 4.8px,#fff 4.800px);"></div>
<span class="t" style="left:21.50px;top:1280.54px;font-size:15.5px;line-height:19px;color:#1a1a1a;letter-spacing:0.505px;-webkit-text-stroke:0.5px #1a1a1a;">Variable collections</span>
<svg class="b" style="left:23.299999999999997px;top:1324.8px" width="18" height="18" viewBox="0 0 18 18"><path d="M9.200 1.900C5 1.900 1.950 4.900 1.950 8.600C1.950 11.800 4.200 14.600 6.600 15.600C7.600 16 8.400 15.600 8.800 14.800C9.300 13.600 10.200 12.900 11.600 12.900H14.200C15.600 12.900 16.450 12 16.450 10.600V8.600C16.450 4.900 13.400 1.900 9.200 1.900Z" fill="none" stroke="#1a1a1a" stroke-width="1.600" stroke-linejoin="round"/><circle cx="5.900" cy="5.900" r="0.950" fill="#1a1a1a"/><circle cx="10.300" cy="5.150" r="0.950" fill="#1a1a1a"/><circle cx="13" cy="7.900" r="0.950" fill="#1a1a1a"/><circle cx="5.300" cy="10" r="0.950" fill="#1a1a1a"/></svg>
<svg class="b" style="left:56.05px;top:1324.8px" width="18" height="18" viewBox="0 0 18 18"><path d="M9.200 1.900C5 1.900 1.950 4.900 1.950 8.600C1.950 11.800 4.200 14.600 6.600 15.600C7.600 16 8.400 15.600 8.800 14.800C9.300 13.600 10.200 12.900 11.600 12.900H14.200C15.600 12.900 16.450 12 16.450 10.600V8.600C16.450 4.900 13.400 1.900 9.200 1.900Z" fill="none" stroke="#1a1a1a" stroke-width="1.600" stroke-linejoin="round"/><circle cx="5.900" cy="5.900" r="0.950" fill="#1a1a1a"/><circle cx="10.300" cy="5.150" r="0.950" fill="#1a1a1a"/><circle cx="13" cy="7.900" r="0.950" fill="#1a1a1a"/><circle cx="5.300" cy="10" r="0.950" fill="#1a1a1a"/></svg>
<svg class="b" style="left:88.8px;top:1324.8px" width="18" height="18" viewBox="0 0 18 18"><path d="M9.200 1.900C5 1.900 1.950 4.900 1.950 8.600C1.950 11.800 4.200 14.600 6.600 15.600C7.600 16 8.400 15.600 8.800 14.800C9.300 13.600 10.200 12.900 11.600 12.900H14.200C15.600 12.900 16.450 12 16.450 10.600V8.600C16.450 4.900 13.400 1.900 9.200 1.900Z" fill="none" stroke="#1a1a1a" stroke-width="1.600" stroke-linejoin="round"/><circle cx="5.900" cy="5.900" r="0.950" fill="#1a1a1a"/><circle cx="10.300" cy="5.150" r="0.950" fill="#1a1a1a"/><circle cx="13" cy="7.900" r="0.950" fill="#1a1a1a"/><circle cx="5.300" cy="10" r="0.950" fill="#1a1a1a"/></svg>
<svg class="b" style="left:121.55000000000001px;top:1324.8px" width="18" height="18" viewBox="0 0 18 18"><path d="M9.200 1.900C5 1.900 1.950 4.900 1.950 8.600C1.950 11.800 4.200 14.600 6.600 15.600C7.600 16 8.400 15.600 8.800 14.800C9.300 13.600 10.200 12.900 11.600 12.900H14.200C15.600 12.900 16.450 12 16.450 10.600V8.600C16.450 4.900 13.400 1.900 9.200 1.900Z" fill="none" stroke="#1a1a1a" stroke-width="1.600" stroke-linejoin="round"/><circle cx="5.900" cy="5.900" r="0.950" fill="#1a1a1a"/><circle cx="10.300" cy="5.150" r="0.950" fill="#1a1a1a"/><circle cx="13" cy="7.900" r="0.950" fill="#1a1a1a"/><circle cx="5.300" cy="10" r="0.950" fill="#1a1a1a"/></svg>
<div class="b" style="left:1178px;top:0px;width:411px;height:1371px;background:#f8f9fc;border-left:1.5px solid #d9d9dc;border-right:1.5px solid #dde3ea;box-sizing:border-box;"></div>
<svg class="b" style="left:1204px;top:36px" width="28" height="34" viewBox="0 0 28 34"><path d="M2.300 4.700L25.200 2.700L25.300 31.100L3.200 30.100Z" fill="#ff2a85" stroke="#ff2a85" stroke-width="1.400" stroke-linejoin="round"/><path d="M19.400 1.800H22.700V5.500L21.050 4.400L19.400 5.600Z" fill="#fbfcfe"/><path d="M18.300 12.300C18.300 9.900 16.600 8.900 14.400 8.900C12 8.900 10.300 10.200 10.300 12.400C10.300 16.900 18.600 16.100 18.600 21C18.600 23.400 16.800 24.500 14.400 24.500C11.800 24.500 10.200 23.300 10.200 20.900" fill="none" stroke="#fff" stroke-width="4.500" stroke-linecap="butt"/></svg>
<span class="t" style="left:1239.00px;top:39.00px;font-size:24.5px;line-height:29px;color:#2e3438;font-weight:700;letter-spacing:-0.461px;">Storybook</span>
<svg class="b" style="left:1542px;top:42.800px" width="21" height="21" viewBox="0 0 22 22"><g fill="none" stroke="#73828c" stroke-width="1.450" stroke-linejoin="round"><path d="M11.00 3.45L11.30 3.41L11.61 3.29L11.93 3.11L12.28 2.89L12.66 2.66L13.05 2.45L13.46 2.28L13.86 2.19L14.25 2.18L14.62 2.27L14.94 2.46L15.21 2.74L15.43 3.10L15.59 3.50L15.72 3.93L15.82 4.36L15.92 4.76L16.02 5.12L16.16 5.42L16.34 5.66L16.58 5.84L16.88 5.98L17.24 6.08L17.64 6.18L18.07 6.28L18.50 6.41L18.90 6.57L19.26 6.79L19.54 7.06L19.73 7.38L19.82 7.75L19.81 8.14L19.72 8.54L19.55 8.95L19.34 9.34L19.11 9.72L18.89 10.07L18.71 10.39L18.59 10.70L18.55 11.00L18.59 11.30L18.71 11.61L18.89 11.93L19.11 12.28L19.34 12.66L19.55 13.05L19.72 13.46L19.81 13.86L19.82 14.25L19.73 14.62L19.54 14.94L19.26 15.21L18.90 15.43L18.50 15.59L18.07 15.72L17.64 15.82L17.24 15.92L16.88 16.02L16.58 16.16L16.34 16.34L16.16 16.58L16.02 16.88L15.92 17.24L15.82 17.64L15.72 18.07L15.59 18.50L15.43 18.90L15.21 19.26L14.94 19.54L14.62 19.73L14.25 19.82L13.86 19.81L13.46 19.72L13.05 19.55L12.66 19.34L12.28 19.11L11.93 18.89L11.61 18.71L11.30 18.59L11.00 18.55L10.70 18.59L10.39 18.71L10.07 18.89L9.72 19.11L9.34 19.34L8.95 19.55L8.54 19.72L8.14 19.81L7.75 19.82L7.38 19.73L7.06 19.54L6.79 19.26L6.57 18.90L6.41 18.50L6.28 18.07L6.18 17.64L6.08 17.24L5.98 16.88L5.84 16.58L5.66 16.34L5.42 16.16L5.12 16.02L4.76 15.92L4.36 15.82L3.93 15.72L3.50 15.59L3.10 15.43L2.74 15.21L2.46 14.94L2.27 14.62L2.18 14.25L2.19 13.86L2.28 13.46L2.45 13.05L2.66 12.66L2.89 12.28L3.11 11.93L3.29 11.61L3.41 11.30L3.45 11.00L3.41 10.70L3.29 10.39L3.11 10.07L2.89 9.72L2.66 9.34L2.45 8.95L2.28 8.54L2.19 8.14L2.18 7.75L2.27 7.38L2.46 7.06L2.74 6.79L3.10 6.57L3.50 6.41L3.93 6.28L4.36 6.18L4.76 6.08L5.12 5.98L5.42 5.84L5.66 5.66L5.84 5.42L5.98 5.12L6.08 4.76L6.18 4.36L6.28 3.93L6.41 3.50L6.57 3.10L6.79 2.74L7.06 2.46L7.38 2.27L7.75 2.18L8.14 2.19L8.54 2.28L8.95 2.45L9.34 2.66L9.72 2.89L10.07 3.11L10.39 3.29L10.70 3.41Z"/><circle cx="11" cy="11" r="3.700"/></g></svg>
<div class="b" style="left:1195px;top:104.4px;width:376px;height:43.2px;border:1.4px solid #cde3f2;border-radius:7px;box-sizing:border-box;background:#f8f9fc;"></div>
<svg class="b" style="left:1206px;top:116px" width="21" height="21" viewBox="0 0 21 21"><circle cx="9" cy="9" r="7" stroke="#5c6870" stroke-width="1.500" fill="none"/><path d="M14 14L19 19" stroke="#5c6870" stroke-width="1.500" stroke-linecap="round"/></svg>
<span class="t" style="left:1236.00px;top:114.70px;font-size:18.2px;line-height:22px;color:#5c6870;letter-spacing:-0.207px;">Find components</span>
<svg class="b" style="left:1533.6px;top:120.300px" width="10.800" height="10.800" viewBox="1.500 1.500 21 21"><path d="M18 3a3 3 0 0 0-3 3v12a3 3 0 0 0 3 3 3 3 0 0 0 3-3 3 3 0 0 0-3-3H6a3 3 0 0 0-3 3 3 3 0 0 0 3 3 3 3 0 0 0 3-3V6a3 3 0 0 0-3-3 3 3 0 0 0-3 3 3 3 0 0 0 3 3h12a3 3 0 0 0 3-3 3 3 0 0 0-3-3z" fill="none" stroke="#5c6870" stroke-width="2.300"/></svg>
<span class="t" style="left:1550.80px;top:116.75px;font-size:15px;line-height:18px;color:#5c6870;-webkit-text-stroke:0.2px #5c6870;">K</span>
<svg class="b" style="left:1204px;top:184.5px" width="14" height="9" viewBox="0 0 14 9"><path d="M1.800 1.800L7 7L12.200 1.800" stroke="#5c6870" stroke-width="1.500" fill="none" stroke-linecap="round" stroke-linejoin="round"/></svg>
<span class="t" style="left:1225.30px;top:179.75px;font-size:15.2px;line-height:18px;color:#5c6870;letter-spacing:1.713px;-webkit-text-stroke:0.75px #5c6870;">TOKENS</span>
<svg class="b" style="left:1544.3px;top:178.4px" width="16" height="22" viewBox="0 0 16 22"><path d="M2.500 7.500L8 2L13.500 7.500M2.500 14.500L8 20L13.500 14.500" stroke="#6d7a84" stroke-width="1.400" fill="none" stroke-linecap="round" stroke-linejoin="round"/></svg>
<svg class="b" style="left:1206.5px;top:225.6px" width="9" height="14" viewBox="0 0 9 14"><path d="M2 2L6.800 7L2 12" stroke="#6d7a84" stroke-width="1.500" fill="none" stroke-linecap="round" stroke-linejoin="round"/></svg>
<svg class="b" style="left:1223.7px;top:223.79999999999998px" width="21" height="17" viewBox="0 0 21 17"><path d="M1.500 2.600c0-.6.500-1.100 1.100-1.100h4.600l2.200 2.300h9c.6 0 1.100.5 1.100 1.100v9.500c0 .6-.5 1.100-1.100 1.100H2.600c-.6 0-1.100-.5-1.100-1.100z" fill="none" stroke="#3520a0" stroke-width="1.650" stroke-linejoin="round"/></svg>
<span class="t" style="left:1252.80px;top:221.29px;font-size:18.8px;line-height:23px;color:#2e3438;letter-spacing:0.379px;">Browser</span>
<svg class="b" style="left:1206.5px;top:264.02px" width="9" height="14" viewBox="0 0 9 14"><path d="M2 2L6.800 7L2 12" stroke="#6d7a84" stroke-width="1.500" fill="none" stroke-linecap="round" stroke-linejoin="round"/></svg>
<svg class="b" style="left:1223.7px;top:262.21999999999997px" width="21" height="17" viewBox="0 0 21 17"><path d="M1.500 2.600c0-.6.500-1.100 1.100-1.100h4.600l2.200 2.300h9c.6 0 1.100.5 1.100 1.100v9.500c0 .6-.5 1.100-1.100 1.100H2.600c-.6 0-1.100-.5-1.100-1.100z" fill="none" stroke="#3520a0" stroke-width="1.650" stroke-linejoin="round"/></svg>
<span class="t" style="left:1252.80px;top:259.71px;font-size:18.8px;line-height:23px;color:#2e3438;letter-spacing:0.284px;">Marketing</span>
<svg class="b" style="left:1206.5px;top:302.44px" width="9" height="14" viewBox="0 0 9 14"><path d="M2 2L6.800 7L2 12" stroke="#6d7a84" stroke-width="1.500" fill="none" stroke-linecap="round" stroke-linejoin="round"/></svg>
<svg class="b" style="left:1223.7px;top:300.64px" width="21" height="17" viewBox="0 0 21 17"><path d="M1.500 2.600c0-.6.500-1.100 1.100-1.100h4.600l2.200 2.300h9c.6 0 1.100.5 1.100 1.100v9.500c0 .6-.5 1.100-1.100 1.100H2.600c-.6 0-1.100-.5-1.100-1.100z" fill="none" stroke="#3520a0" stroke-width="1.650" stroke-linejoin="round"/></svg>
<span class="t" style="left:1252.80px;top:298.13px;font-size:18.8px;line-height:23px;color:#2e3438;letter-spacing:0.273px;">News</span>
<svg class="b" style="left:1206.5px;top:340.86px" width="9" height="14" viewBox="0 0 9 14"><path d="M2 2L6.800 7L2 12" stroke="#6d7a84" stroke-width="1.500" fill="none" stroke-linecap="round" stroke-linejoin="round"/></svg>
<svg class="b" style="left:1223.7px;top:339.06px" width="21" height="17" viewBox="0 0 21 17"><path d="M1.500 2.600c0-.6.500-1.100 1.100-1.100h4.600l2.200 2.300h9c.6 0 1.100.5 1.100 1.100v9.500c0 .6-.5 1.100-1.100 1.100H2.600c-.6 0-1.100-.5-1.100-1.100z" fill="none" stroke="#3520a0" stroke-width="1.650" stroke-linejoin="round"/></svg>
<span class="t" style="left:1252.80px;top:336.55px;font-size:18.8px;line-height:23px;color:#2e3438;letter-spacing:0.370px;">New Tab</span>
<svg class="b" style="left:1206.5px;top:379.28px" width="9" height="14" viewBox="0 0 9 14"><path d="M2 2L6.800 7L2 12" stroke="#6d7a84" stroke-width="1.500" fill="none" stroke-linecap="round" stroke-linejoin="round"/></svg>
<svg class="b" style="left:1223.7px;top:377.47999999999996px" width="21" height="17" viewBox="0 0 21 17"><path d="M1.500 2.600c0-.6.500-1.100 1.100-1.100h4.600l2.200 2.300h9c.6 0 1.100.5 1.100 1.100v9.500c0 .6-.5 1.100-1.100 1.100H2.600c-.6 0-1.100-.5-1.100-1.100z" fill="none" stroke="#3520a0" stroke-width="1.650" stroke-linejoin="round"/></svg>
<span class="t" style="left:1252.80px;top:374.97px;font-size:18.8px;line-height:23px;color:#2e3438;letter-spacing:-0.412px;">Search</span>
<svg class="b" style="left:1206.5px;top:417.70000000000005px" width="9" height="14" viewBox="0 0 9 14"><path d="M2 2L6.800 7L2 12" stroke="#6d7a84" stroke-width="1.500" fill="none" stroke-linecap="round" stroke-linejoin="round"/></svg>
<svg class="b" style="left:1223.7px;top:415.90000000000003px" width="21" height="17" viewBox="0 0 21 17"><path d="M1.500 2.600c0-.6.500-1.100 1.100-1.100h4.600l2.200 2.300h9c.6 0 1.100.5 1.100 1.100v9.500c0 .6-.5 1.100-1.100 1.100H2.600c-.6 0-1.100-.5-1.100-1.100z" fill="none" stroke="#3520a0" stroke-width="1.650" stroke-linejoin="round"/></svg>
<span class="t" style="left:1252.80px;top:413.39px;font-size:18.8px;line-height:23px;color:#2e3438;letter-spacing:0.194px;">Universal</span>
<svg class="b" style="left:1204px;top:481.3px" width="14" height="9" viewBox="0 0 14 9"><path d="M1.800 1.800L7 7L12.200 1.800" stroke="#5c6870" stroke-width="1.500" fill="none" stroke-linecap="round" stroke-linejoin="round"/></svg>
<span class="t" style="left:1225.30px;top:476.55px;font-size:15.2px;line-height:18px;color:#5c6870;letter-spacing:1.956px;-webkit-text-stroke:0.75px #5c6870;">COMPONENTS</span>
<svg class="b" style="left:1544.3px;top:475.2px" width="16" height="22" viewBox="0 0 16 22"><path d="M2.500 7.500L8 2L13.500 7.500M2.500 14.500L8 20L13.500 14.500" stroke="#6d7a84" stroke-width="1.400" fill="none" stroke-linecap="round" stroke-linejoin="round"/></svg>
<svg class="b" style="left:1206.5px;top:522.0px" width="9" height="14" viewBox="0 0 9 14"><path d="M2 2L6.800 7L2 12" stroke="#6d7a84" stroke-width="1.500" fill="none" stroke-linecap="round" stroke-linejoin="round"/></svg>
<svg class="b" style="left:1225.4px;top:520.1px" width="18" height="18" viewBox="0 0 18 18"><rect x="1.600" y="1.600" width="14.900" height="14.900" rx="2.800" fill="none" stroke="#1ea7fd" stroke-width="1.500"/><path d="M9.050 1.600V16.500M1.600 9.050H16.500" stroke="#1ea7fd" stroke-width="1.500"/></svg>
<span class="t" style="left:1252.80px;top:517.69px;font-size:18.8px;line-height:23px;color:#2e3438;letter-spacing:0.868px;">Alert</span>
<div class="b" style="left:1194.6px;top:548.5px;width:377px;height:38.2px;background:#d4ebfb;border-radius:5px;"></div>
<svg class="b" style="left:1206.5px;top:560.415px" width="9" height="14" viewBox="0 0 9 14"><path d="M2 2L6.800 7L2 12" stroke="#6d7a84" stroke-width="1.500" fill="none" stroke-linecap="round" stroke-linejoin="round"/></svg>
<svg class="b" style="left:1225.4px;top:558.515px" width="18" height="18" viewBox="0 0 18 18"><rect x="1.600" y="1.600" width="14.900" height="14.900" rx="2.800" fill="none" stroke="#1ea7fd" stroke-width="1.500"/><path d="M9.050 1.600V16.500M1.600 9.050H16.500" stroke="#1ea7fd" stroke-width="1.500"/></svg>
<span class="t" style="left:1252.80px;top:556.10px;font-size:18.8px;line-height:23px;color:#2e3438;letter-spacing:0.456px;">Button</span>
<svg class="b" style="left:1206.5px;top:598.83px" width="9" height="14" viewBox="0 0 9 14"><path d="M2 2L6.800 7L2 12" stroke="#6d7a84" stroke-width="1.500" fill="none" stroke-linecap="round" stroke-linejoin="round"/></svg>
<svg class="b" style="left:1225.4px;top:596.9300000000001px" width="18" height="18" viewBox="0 0 18 18"><rect x="1.600" y="1.600" width="14.900" height="14.900" rx="2.800" fill="none" stroke="#1ea7fd" stroke-width="1.500"/><path d="M9.050 1.600V16.500M1.600 9.050H16.500" stroke="#1ea7fd" stroke-width="1.500"/></svg>
<span class="t" style="left:1252.80px;top:594.52px;font-size:18.8px;line-height:23px;color:#2e3438;letter-spacing:0.381px;">ButtonMenu</span>
<svg class="b" style="left:1206.5px;top:637.245px" width="9" height="14" viewBox="0 0 9 14"><path d="M2 2L6.800 7L2 12" stroke="#6d7a84" stroke-width="1.500" fill="none" stroke-linecap="round" stroke-linejoin="round"/></svg>
<svg class="b" style="left:1225.4px;top:635.345px" width="18" height="18" viewBox="0 0 18 18"><rect x="1.600" y="1.600" width="14.900" height="14.900" rx="2.800" fill="none" stroke="#1ea7fd" stroke-width="1.500"/><path d="M9.050 1.600V16.500M1.600 9.050H16.500" stroke="#1ea7fd" stroke-width="1.500"/></svg>
<span class="t" style="left:1252.80px;top:632.93px;font-size:18.8px;line-height:23px;color:#2e3438;letter-spacing:-0.101px;">Checkbox</span>
<svg class="b" style="left:1206.5px;top:675.66px" width="9" height="14" viewBox="0 0 9 14"><path d="M2 2L6.800 7L2 12" stroke="#6d7a84" stroke-width="1.500" fill="none" stroke-linecap="round" stroke-linejoin="round"/></svg>
<svg class="b" style="left:1225.4px;top:673.76px" width="18" height="18" viewBox="0 0 18 18"><rect x="1.600" y="1.600" width="14.900" height="14.900" rx="2.800" fill="none" stroke="#1ea7fd" stroke-width="1.500"/><path d="M9.050 1.600V16.500M1.600 9.050H16.500" stroke="#1ea7fd" stroke-width="1.500"/></svg>
<span class="t" style="left:1252.80px;top:671.35px;font-size:18.8px;line-height:23px;color:#2e3438;letter-spacing:0.093px;">Collapse</span>
<svg class="b" style="left:1206.5px;top:714.075px" width="9" height="14" viewBox="0 0 9 14"><path d="M2 2L6.800 7L2 12" stroke="#6d7a84" stroke-width="1.500" fill="none" stroke-linecap="round" stroke-linejoin="round"/></svg>
<svg class="b" style="left:1225.4px;top:712.1750000000001px" width="18" height="18" viewBox="0 0 18 18"><rect x="1.600" y="1.600" width="14.900" height="14.900" rx="2.800" fill="none" stroke="#1ea7fd" stroke-width="1.500"/><path d="M9.050 1.600V16.500M1.600 9.050H16.500" stroke="#1ea7fd" stroke-width="1.500"/></svg>
<span class="t" style="left:1252.80px;top:709.76px;font-size:18.8px;line-height:23px;color:#2e3438;letter-spacing:0.317px;">Dialog</span>
<svg class="b" style="left:1206.5px;top:752.49px" width="9" height="14" viewBox="0 0 9 14"><path d="M2 2L6.800 7L2 12" stroke="#6d7a84" stroke-width="1.500" fill="none" stroke-linecap="round" stroke-linejoin="round"/></svg>
<svg class="b" style="left:1225.4px;top:750.59px" width="18" height="18" viewBox="0 0 18 18"><rect x="1.600" y="1.600" width="14.900" height="14.900" rx="2.800" fill="none" stroke="#1ea7fd" stroke-width="1.500"/><path d="M9.050 1.600V16.500M1.600 9.050H16.500" stroke="#1ea7fd" stroke-width="1.500"/></svg>
<span class="t" style="left:1252.80px;top:748.18px;font-size:18.8px;line-height:23px;color:#2e3438;letter-spacing:0.600px;">Dropdown</span>
<svg class="b" style="left:1206.5px;top:790.905px" width="9" height="14" viewBox="0 0 9 14"><path d="M2 2L6.800 7L2 12" stroke="#6d7a84" stroke-width="1.500" fill="none" stroke-linecap="round" stroke-linejoin="round"/></svg>
<svg class="b" style="left:1225.4px;top:789.005px" width="18" height="18" viewBox="0 0 18 18"><rect x="1.600" y="1.600" width="14.900" height="14.900" rx="2.800" fill="none" stroke="#1ea7fd" stroke-width="1.500"/><path d="M9.050 1.600V16.500M1.600 9.050H16.500" stroke="#1ea7fd" stroke-width="1.500"/></svg>
<span class="t" style="left:1252.80px;top:786.59px;font-size:18.8px;line-height:23px;color:#2e3438;letter-spacing:-0.385px;">Icon</span>
<svg class="b" style="left:1206.5px;top:829.3199999999999px" width="9" height="14" viewBox="0 0 9 14"><path d="M2 2L6.800 7L2 12" stroke="#6d7a84" stroke-width="1.500" fill="none" stroke-linecap="round" stroke-linejoin="round"/></svg>
<svg class="b" style="left:1225.4px;top:827.42px" width="18" height="18" viewBox="0 0 18 18"><rect x="1.600" y="1.600" width="14.900" height="14.900" rx="2.800" fill="none" stroke="#1ea7fd" stroke-width="1.500"/><path d="M9.050 1.600V16.500M1.600 9.050H16.500" stroke="#1ea7fd" stroke-width="1.500"/></svg>
<span class="t" style="left:1252.80px;top:825.01px;font-size:18.8px;line-height:23px;color:#2e3438;letter-spacing:0.416px;">Input</span>
<svg class="b" style="left:1206.5px;top:867.735px" width="9" height="14" viewBox="0 0 9 14"><path d="M2 2L6.800 7L2 12" stroke="#6d7a84" stroke-width="1.500" fill="none" stroke-linecap="round" stroke-linejoin="round"/></svg>
<svg class="b" style="left:1225.4px;top:865.835px" width="18" height="18" viewBox="0 0 18 18"><rect x="1.600" y="1.600" width="14.900" height="14.900" rx="2.800" fill="none" stroke="#1ea7fd" stroke-width="1.500"/><path d="M9.050 1.600V16.500M1.600 9.050H16.500" stroke="#1ea7fd" stroke-width="1.500"/></svg>
<span class="t" style="left:1252.80px;top:863.42px;font-size:18.8px;line-height:23px;color:#2e3438;letter-spacing:0.159px;">Label</span>
<svg class="b" style="left:1206.5px;top:906.15px" width="9" height="14" viewBox="0 0 9 14"><path d="M2 2L6.800 7L2 12" stroke="#6d7a84" stroke-width="1.500" fill="none" stroke-linecap="round" stroke-linejoin="round"/></svg>
<svg class="b" style="left:1225.4px;top:904.25px" width="18" height="18" viewBox="0 0 18 18"><rect x="1.600" y="1.600" width="14.900" height="14.900" rx="2.800" fill="none" stroke="#1ea7fd" stroke-width="1.500"/><path d="M9.050 1.600V16.500M1.600 9.050H16.500" stroke="#1ea7fd" stroke-width="1.500"/></svg>
<span class="t" style="left:1252.80px;top:901.84px;font-size:18.8px;line-height:23px;color:#2e3438;letter-spacing:-0.023px;">Link</span>
<svg class="b" style="left:1206.5px;top:944.565px" width="9" height="14" viewBox="0 0 9 14"><path d="M2 2L6.800 7L2 12" stroke="#6d7a84" stroke-width="1.500" fill="none" stroke-linecap="round" stroke-linejoin="round"/></svg>
<svg class="b" style="left:1225.4px;top:942.6650000000001px" width="18" height="18" viewBox="0 0 18 18"><rect x="1.600" y="1.600" width="14.900" height="14.900" rx="2.800" fill="none" stroke="#1ea7fd" stroke-width="1.500"/><path d="M9.050 1.600V16.500M1.600 9.050H16.500" stroke="#1ea7fd" stroke-width="1.500"/></svg>
<span class="t" style="left:1252.80px;top:940.25px;font-size:18.8px;line-height:23px;color:#2e3438;letter-spacing:0.173px;">Nav Dots</span>
<svg class="b" style="left:1206.5px;top:982.98px" width="9" height="14" viewBox="0 0 9 14"><path d="M2 2L6.800 7L2 12" stroke="#6d7a84" stroke-width="1.500" fill="none" stroke-linecap="round" stroke-linejoin="round"/></svg>
<svg class="b" style="left:1225.4px;top:981.08px" width="18" height="18" viewBox="0 0 18 18"><rect x="1.600" y="1.600" width="14.900" height="14.900" rx="2.800" fill="none" stroke="#1ea7fd" stroke-width="1.500"/><path d="M9.050 1.600V16.500M1.600 9.050H16.500" stroke="#1ea7fd" stroke-width="1.500"/></svg>
<span class="t" style="left:1252.80px;top:978.67px;font-size:18.8px;line-height:23px;color:#2e3438;letter-spacing:0.276px;">Navigation</span>
<svg class="b" style="left:1206.5px;top:1021.395px" width="9" height="14" viewBox="0 0 9 14"><path d="M2 2L6.800 7L2 12" stroke="#6d7a84" stroke-width="1.500" fill="none" stroke-linecap="round" stroke-linejoin="round"/></svg>
<svg class="b" style="left:1225.4px;top:1019.4949999999999px" width="18" height="18" viewBox="0 0 18 18"><rect x="1.600" y="1.600" width="14.900" height="14.900" rx="2.800" fill="none" stroke="#1ea7fd" stroke-width="1.500"/><path d="M9.050 1.600V16.500M1.600 9.050H16.500" stroke="#1ea7fd" stroke-width="1.500"/></svg>
<span class="t" style="left:1252.80px;top:1017.08px;font-size:18.8px;line-height:23px;color:#2e3438;letter-spacing:0.016px;">Progress Bar</span>
<svg class="b" style="left:1206.5px;top:1059.81px" width="9" height="14" viewBox="0 0 9 14"><path d="M2 2L6.800 7L2 12" stroke="#6d7a84" stroke-width="1.500" fill="none" stroke-linecap="round" stroke-linejoin="round"/></svg>
<svg class="b" style="left:1225.4px;top:1057.9099999999999px" width="18" height="18" viewBox="0 0 18 18"><rect x="1.600" y="1.600" width="14.900" height="14.900" rx="2.800" fill="none" stroke="#1ea7fd" stroke-width="1.500"/><path d="M9.050 1.600V16.500M1.600 9.050H16.500" stroke="#1ea7fd" stroke-width="1.500"/></svg>
<span class="t" style="left:1252.80px;top:1055.50px;font-size:18.8px;line-height:23px;color:#2e3438;letter-spacing:0.006px;">Progress Ring</span>
<svg class="b" style="left:1206.5px;top:1098.225px" width="9" height="14" viewBox="0 0 9 14"><path d="M2 2L6.800 7L2 12" stroke="#6d7a84" stroke-width="1.500" fill="none" stroke-linecap="round" stroke-linejoin="round"/></svg>
<svg class="b" style="left:1225.4px;top:1096.3249999999998px" width="18" height="18" viewBox="0 0 18 18"><rect x="1.600" y="1.600" width="14.900" height="14.900" rx="2.800" fill="none" stroke="#1ea7fd" stroke-width="1.500"/><path d="M9.050 1.600V16.500M1.600 9.050H16.500" stroke="#1ea7fd" stroke-width="1.500"/></svg>
<span class="t" style="left:1252.80px;top:1093.91px;font-size:18.8px;line-height:23px;color:#2e3438;letter-spacing:0.216px;">Radio Button</span>
<svg class="b" style="left:1206.5px;top:1136.6399999999999px" width="9" height="14" viewBox="0 0 9 14"><path d="M2 2L6.800 7L2 12" stroke="#6d7a84" stroke-width="1.500" fill="none" stroke-linecap="round" stroke-linejoin="round"/></svg>
<svg class="b" style="left:1225.4px;top:1134.7399999999998px" width="18" height="18" viewBox="0 0 18 18"><rect x="1.600" y="1.600" width="14.900" height="14.900" rx="2.800" fill="none" stroke="#1ea7fd" stroke-width="1.500"/><path d="M9.050 1.600V16.500M1.600 9.050H16.500" stroke="#1ea7fd" stroke-width="1.500"/></svg>
<span class="t" style="left:1252.80px;top:1132.33px;font-size:18.8px;line-height:23px;color:#2e3438;letter-spacing:0.295px;">SegmentedControl</span>
<svg class="b" style="left:1206.5px;top:1175.0549999999998px" width="9" height="14" viewBox="0 0 9 14"><path d="M2 2L6.800 7L2 12" stroke="#6d7a84" stroke-width="1.500" fill="none" stroke-linecap="round" stroke-linejoin="round"/></svg>
<svg class="b" style="left:1225.4px;top:1173.1549999999997px" width="18" height="18" viewBox="0 0 18 18"><rect x="1.600" y="1.600" width="14.900" height="14.900" rx="2.800" fill="none" stroke="#1ea7fd" stroke-width="1.500"/><path d="M9.050 1.600V16.500M1.600 9.050H16.500" stroke="#1ea7fd" stroke-width="1.500"/></svg>
<span class="t" style="left:1252.80px;top:1170.74px;font-size:18.8px;line-height:23px;color:#2e3438;letter-spacing:-0.029px;">Tabs</span>
<svg class="b" style="left:1206.5px;top:1213.47px" width="9" height="14" viewBox="0 0 9 14"><path d="M2 2L6.800 7L2 12" stroke="#6d7a84" stroke-width="1.500" fill="none" stroke-linecap="round" stroke-linejoin="round"/></svg>
<svg class="b" style="left:1225.4px;top:1211.57px" width="18" height="18" viewBox="0 0 18 18"><rect x="1.600" y="1.600" width="14.900" height="14.900" rx="2.800" fill="none" stroke="#1ea7fd" stroke-width="1.500"/><path d="M9.050 1.600V16.500M1.600 9.050H16.500" stroke="#1ea7fd" stroke-width="1.500"/></svg>
<span class="t" style="left:1252.80px;top:1209.16px;font-size:18.8px;line-height:23px;color:#2e3438;letter-spacing:0.338px;">TextArea</span>
<svg class="b" style="left:1206.5px;top:1251.885px" width="9" height="14" viewBox="0 0 9 14"><path d="M2 2L6.800 7L2 12" stroke="#6d7a84" stroke-width="1.500" fill="none" stroke-linecap="round" stroke-linejoin="round"/></svg>
<svg class="b" style="left:1225.4px;top:1249.985px" width="18" height="18" viewBox="0 0 18 18"><rect x="1.600" y="1.600" width="14.900" height="14.900" rx="2.800" fill="none" stroke="#1ea7fd" stroke-width="1.500"/><path d="M9.050 1.600V16.500M1.600 9.050H16.500" stroke="#1ea7fd" stroke-width="1.500"/></svg>
<span class="t" style="left:1252.80px;top:1247.57px;font-size:18.8px;line-height:23px;color:#2e3438;letter-spacing:0.416px;">Toggle</span>
<svg class="b" style="left:1206.5px;top:1290.3px" width="9" height="14" viewBox="0 0 9 14"><path d="M2 2L6.800 7L2 12" stroke="#6d7a84" stroke-width="1.500" fill="none" stroke-linecap="round" stroke-linejoin="round"/></svg>
<svg class="b" style="left:1225.4px;top:1288.3999999999999px" width="18" height="18" viewBox="0 0 18 18"><rect x="1.600" y="1.600" width="14.900" height="14.900" rx="2.800" fill="none" stroke="#1ea7fd" stroke-width="1.500"/><path d="M9.050 1.600V16.500M1.600 9.050H16.500" stroke="#1ea7fd" stroke-width="1.500"/></svg>
<span class="t" style="left:1252.80px;top:1285.99px;font-size:18.8px;line-height:23px;color:#2e3438;letter-spacing:0.507px;">Tooltip</span>
<div class="b" style="left:1589px;top:0px;width:331px;height:1371px;background:#fff;"></div>
<div class="b" style="left:1589px;top:55.7px;width:331px;height:1.9px;background:#e6e8eb;"></div>
<div class="b" style="left:1590px;top:0px;width:330px;height:2.4px;background:linear-gradient(180deg,#f6f6f6,#efefef);"></div>
<svg class="b" style="left:1612.3px;top:20.0px" width="20" height="20" viewBox="0 0 20 20"><g fill="none" stroke="#73828c" stroke-width="1.350" stroke-linecap="round" stroke-linejoin="round"><path d="M7.400 2.100A8.300 8.300 0 0 0 8.600 18.200"/><path d="M4.200 2.400L8 2L7.400 5.700"/><path d="M12.600 17.900A8.300 8.300 0 0 0 11.400 1.800"/><path d="M15.800 17.600L12 18L12.600 14.300"/></g></svg>
<svg class="b" style="left:1658.7px;top:20.0px" width="20" height="20" viewBox="0 0 20 20"><g fill="none" stroke="#73828c" stroke-width="1.350" stroke-linecap="round" stroke-linejoin="round"><circle cx="8.600" cy="8.600" r="7.200"/><path d="M13.900 13.900L18.900 18.900M5.600 8.600H11.600M8.600 5.600V11.600"/></g></svg>
<svg class="b" style="left:1705.8px;top:20.0px" width="20" height="20" viewBox="0 0 20 20"><g fill="none" stroke="#73828c" stroke-width="1.350" stroke-linecap="round" stroke-linejoin="round"><circle cx="8.600" cy="8.600" r="7.200"/><path d="M13.900 13.900L18.900 18.900M5.600 8.600H11.600"/></g></svg>
<svg class="b" style="left:1752.2px;top:20.0px" width="20" height="20" viewBox="0 0 20 20"><g fill="none" stroke="#73828c" stroke-width="1.350" stroke-linecap="round" stroke-linejoin="round"><path d="M1.600 10.200A7.200 7.200 0 1 0 5.600 2"/><path d="M1.800 2.300V6H5.500"/><path d="M13.900 13.900L18.900 18.900"/></g></svg>
<div class="b" style="left:1792.6px;top:16.2px;width:1.3px;height:27.7px;background:#dfe3e8;"></div>
<svg class="b" style="left:1814.0px;top:20.0px" width="20" height="20" viewBox="0 0 20 20"><g fill="none" stroke="#73828c" stroke-width="1.350" stroke-linecap="round" stroke-linejoin="round"><rect x="2.200" y="2.500" width="15.600" height="15" rx="1"/><circle cx="6.300" cy="6.500" r="1.300"/><path d="M2.500 15L8 9.500L12 13.500M11 12.500L13.300 10.300L17.500 14.500"/></g></svg>
<svg class="b" style="left:1860.7px;top:20.0px" width="20" height="20" viewBox="0 0 20 20"><g fill="none" stroke="#73828c" stroke-width="1.350" stroke-linecap="round" stroke-linejoin="round"><rect x="2.300" y="2.300" width="6.300" height="6.300" rx="0.700"/><rect x="11.400" y="2.300" width="6.300" height="6.300" rx="0.700"/><rect x="2.300" y="11.400" width="6.300" height="6.300" rx="0.700"/><rect x="11.400" y="11.400" width="6.300" height="6.300" rx="0.700"/></g></svg>
<svg class="b" style="left:1907px;top:20px" width="13" height="20" viewBox="0 0 13 20"><g fill="none" stroke="#73828c" stroke-width="1.350"><path d="M2.300 2.300H13M2.300 5.100H13"/><rect x="2.700" y="7.900" width="14" height="10" rx="1"/></g></svg>
<span class="t" style="left:1630.60px;top:114.39px;font-size:19px;line-height:23px;color:#000;letter-spacing:-0.005px;">Jumbo</span>
<div class="b" style="left:1630.6px;top:151.7px;width:122.4px;height:83px;border-radius:41.5px;background:linear-gradient(180deg,#ff4200 0%,#ff2600 36%,#fd0000 62%,#fb0000 100%);"></div>
<span class="t" style="left:1664.40px;top:178.70px;font-size:24.3px;line-height:29px;color:#fff;font-weight:700;letter-spacing:0.009px;">Hero</span>
<div class="b" style="left:1785.8px;top:151.7px;width:126.7px;height:83px;border-radius:41.5px;background:#3f4bd6;"></div>
<span class="t" style="left:1819.40px;top:178.70px;font-size:24.3px;line-height:29px;color:#fff;font-weight:700;letter-spacing:-0.526px;">Filled</span>
<span class="t" style="left:1630.60px;top:266.79px;font-size:19px;line-height:23px;color:#000;letter-spacing:0.081px;">Large</span>
<div class="b" style="left:1630.6px;top:305.8px;width:105px;height:71.1px;border-radius:35.55px;background:linear-gradient(180deg,#ff4200 0%,#ff2600 36%,#fd0000 62%,#fb0000 100%);"></div>
<span class="t" style="left:1658.10px;top:328.24px;font-size:22px;line-height:26px;color:#fff;font-weight:700;letter-spacing:0.120px;">Hero</span>
<div class="b" style="left:1768.6px;top:305.8px;width:111.3px;height:71.1px;border-radius:35.55px;background:#3f4bd6;"></div>
<span class="t" style="left:1796.90px;top:328.24px;font-size:22px;line-height:26px;color:#fff;font-weight:700;letter-spacing:-0.458px;">Filled</span>
<div class="b" style="left:1912.2px;top:305.8px;width:120px;height:71.1px;border-radius:35.55px;background:#fff;border:1.4px solid #5a62db;box-sizing:border-box;"></div>
<span class="t" style="left:1630.60px;top:409.29px;font-size:19px;line-height:23px;color:#000;letter-spacing:0.070px;">Medium</span>
<div class="b" style="left:1630.6px;top:447.5px;width:88.5px;height:60px;border-radius:30.0px;background:linear-gradient(180deg,#ff4200 0%,#ff2600 36%,#fd0000 62%,#fb0000 100%);"></div>
<span class="t" style="left:1652.90px;top:465.48px;font-size:19.6px;line-height:24px;color:#fff;font-weight:700;letter-spacing:0.012px;">Hero</span>
<div class="b" style="left:1751.5px;top:447.5px;width:94.5px;height:60px;border-radius:30.0px;background:#3f4bd6;"></div>
<span class="t" style="left:1774.20px;top:465.48px;font-size:19.6px;line-height:24px;color:#fff;font-weight:700;letter-spacing:-0.280px;">Filled</span>
<div class="b" style="left:1878.7px;top:447.5px;width:120px;height:60px;border-radius:30.0px;background:#fff;border:1.4px solid #5a62db;box-sizing:border-box;"></div>
<span class="t" style="left:1902.20px;top:465.48px;font-size:19.6px;line-height:24px;color:#3f4bd6;font-weight:700;letter-spacing:0.100px;">Outline</span>
<span class="t" style="left:1630.60px;top:540.19px;font-size:19px;line-height:23px;color:#000;letter-spacing:0.098px;">Small</span>
<div class="b" style="left:1630.6px;top:578.5px;width:82.6px;height:49.5px;border-radius:24.75px;background:linear-gradient(180deg,#ff4200 0%,#ff2600 36%,#fd0000 62%,#fb0000 100%);"></div>
<span class="t" style="left:1652.90px;top:593.22px;font-size:16.9px;line-height:20px;color:#fff;font-weight:700;letter-spacing:0.049px;">Hero</span>
<div class="b" style="left:1746.3px;top:578.5px;width:88.2px;height:49.5px;border-radius:24.75px;background:#3f4bd6;"></div>
<span class="t" style="left:1768.60px;top:593.22px;font-size:16.9px;line-height:20px;color:#fff;font-weight:700;letter-spacing:-0.154px;">Filled</span>
<div class="b" style="left:1867.2px;top:578.5px;width:120px;height:49.5px;border-radius:24.75px;background:#fff;border:1.4px solid #5a62db;box-sizing:border-box;"></div>
<span class="t" style="left:1890.60px;top:593.22px;font-size:16.9px;line-height:20px;color:#3f4bd6;font-weight:700;letter-spacing:0.100px;">Outline</span>
<span class="t" style="left:1630.60px;top:660.39px;font-size:19px;line-height:23px;color:#000;letter-spacing:0.077px;">Tiny</span>
<div class="b" style="left:1630.6px;top:698.7px;width:71.8px;height:38.3px;border-radius:19.15px;background:linear-gradient(180deg,#ff4200 0%,#ff2600 36%,#fd0000 62%,#fb0000 100%);"></div>
<span class="t" style="left:1647.30px;top:707.92px;font-size:16.9px;line-height:20px;color:#fff;font-weight:700;letter-spacing:0.049px;">Hero</span>
<div class="b" style="left:1735.5px;top:698.7px;width:76.6px;height:38.3px;border-radius:19.15px;background:#3f4bd6;"></div>
<span class="t" style="left:1752.20px;top:707.92px;font-size:16.9px;line-height:20px;color:#fff;font-weight:700;letter-spacing:-0.221px;">Filled</span>
<div class="b" style="left:1845.3px;top:698.7px;width:120px;height:38.3px;border-radius:19.15px;background:#fff;border:1.4px solid #5a62db;box-sizing:border-box;"></div>
<span class="t" style="left:1863.50px;top:707.92px;font-size:16.9px;line-height:20px;color:#3f4bd6;font-weight:700;letter-spacing:0.100px;">Outline</span>
<span class="t" style="left:1630.60px;top:768.99px;font-size:19px;line-height:23px;color:#000;letter-spacing:-0.005px;">Jumbo</span>
<div class="b" style="left:1630.4px;top:809.5px;width:88px;height:88px;border-radius:50%;background:linear-gradient(180deg,#ff4200 0%,#ff2600 36%,#fd0000 62%,#fb0000 100%);"></div>
<svg class="b" style="left:1657.2025px;top:836.3025px" width="34.394999999999996" height="34.394999999999996" viewBox="-17.197499999999998 -17.197499999999998 34.394999999999996 34.394999999999996"><circle cx="0" cy="0" r="15.10" fill="none" stroke="#fff" stroke-width="2.20"/><path d="M-5.67 0.81L-1.35 5.40L5.60 -4.18" fill="none" stroke="#fff" stroke-width="2.69" stroke-linejoin="round"/></svg>
<div class="b" style="left:1751.0px;top:809.5px;width:88px;height:88px;border-radius:50%;background:#3f4bd6;"></div>
<svg class="b" style="left:1777.8025px;top:836.3025px" width="34.394999999999996" height="34.394999999999996" viewBox="-17.197499999999998 -17.197499999999998 34.394999999999996 34.394999999999996"><circle cx="0" cy="0" r="15.10" fill="none" stroke="#fff" stroke-width="2.20"/><path d="M-5.67 0.81L-1.35 5.40L5.60 -4.18" fill="none" stroke="#fff" stroke-width="2.69" stroke-linejoin="round"/></svg>
<div class="b" style="left:1871.5px;top:809.0px;width:89px;height:89px;border-radius:50%;background:#fff;border:1.3px solid #5a62db;box-sizing:border-box;"></div>
<svg class="b" style="left:1898.8025px;top:836.3025px" width="34.394999999999996" height="34.394999999999996" viewBox="-17.197499999999998 -17.197499999999998 34.394999999999996 34.394999999999996"><circle cx="0" cy="0" r="15.10" fill="none" stroke="#3f4bd6" stroke-width="2.20"/><path d="M-5.67 0.81L-1.35 5.40L5.60 -4.18" fill="none" stroke="#3f4bd6" stroke-width="2.69" stroke-linejoin="round"/></svg>
<span class="t" style="left:1630.60px;top:930.59px;font-size:19px;line-height:23px;color:#000;letter-spacing:0.081px;">Large</span>
<div class="b" style="left:1630.3px;top:970.5px;width:77px;height:77px;border-radius:50%;background:linear-gradient(180deg,#ff4200 0%,#ff2600 36%,#fd0000 62%,#fb0000 100%);"></div>
<svg class="b" style="left:1653.1699999999998px;top:993.37px" width="31.259999999999998" height="31.259999999999998" viewBox="-15.629999999999999 -15.629999999999999 31.259999999999998 31.259999999999998"><circle cx="0" cy="0" r="13.64" fill="none" stroke="#fff" stroke-width="1.99"/><path d="M-5.12 0.73L-1.22 4.88L5.06 -3.78" fill="none" stroke="#fff" stroke-width="2.43" stroke-linejoin="round"/></svg>
<div class="b" style="left:1739.8px;top:970.5px;width:77px;height:77px;border-radius:50%;background:#3f4bd6;"></div>
<svg class="b" style="left:1762.6699999999998px;top:993.37px" width="31.259999999999998" height="31.259999999999998" viewBox="-15.629999999999999 -15.629999999999999 31.259999999999998 31.259999999999998"><circle cx="0" cy="0" r="13.64" fill="none" stroke="#fff" stroke-width="1.99"/><path d="M-5.12 0.73L-1.22 4.88L5.06 -3.78" fill="none" stroke="#fff" stroke-width="2.43" stroke-linejoin="round"/></svg>
<div class="b" style="left:1850.2px;top:970.0px;width:78px;height:78px;border-radius:50%;background:#fff;border:1.3px solid #5a62db;box-sizing:border-box;"></div>
<svg class="b" style="left:1873.57px;top:993.37px" width="31.259999999999998" height="31.259999999999998" viewBox="-15.629999999999999 -15.629999999999999 31.259999999999998 31.259999999999998"><circle cx="0" cy="0" r="13.64" fill="none" stroke="#3f4bd6" stroke-width="1.99"/><path d="M-5.12 0.73L-1.22 4.88L5.06 -3.78" fill="none" stroke="#3f4bd6" stroke-width="2.43" stroke-linejoin="round"/></svg>
<span class="t" style="left:1630.60px;top:1080.89px;font-size:19px;line-height:23px;color:#000;letter-spacing:0.070px;">Medium</span>
<div class="b" style="left:1630.45px;top:1120.45px;width:60.5px;height:60.5px;border-radius:50%;background:linear-gradient(180deg,#ff4200 0%,#ff2600 36%,#fd0000 62%,#fb0000 100%);"></div>
<svg class="b" style="left:1647.8915px;top:1137.8915px" width="25.617" height="25.617" viewBox="-12.8085 -12.8085 25.617 25.617"><circle cx="0" cy="0" r="11.01" fill="none" stroke="#fff" stroke-width="1.61"/><path d="M-4.13 0.59L-0.98 3.94L4.08 -3.05" fill="none" stroke="#fff" stroke-width="1.96" stroke-linejoin="round"/></svg>
<div class="b" style="left:1723.75px;top:1120.45px;width:60.5px;height:60.5px;border-radius:50%;background:#3f4bd6;"></div>
<svg class="b" style="left:1741.1915px;top:1137.8915px" width="25.617" height="25.617" viewBox="-12.8085 -12.8085 25.617 25.617"><circle cx="0" cy="0" r="11.01" fill="none" stroke="#fff" stroke-width="1.61"/><path d="M-4.13 0.59L-0.98 3.94L4.08 -3.05" fill="none" stroke="#fff" stroke-width="1.96" stroke-linejoin="round"/></svg>
<div class="b" style="left:1817.5px;top:1119.7px;width:62px;height:62px;border-radius:50%;background:#fff;border:1.3px solid #5a62db;box-sizing:border-box;"></div>
<svg class="b" style="left:1835.6915px;top:1137.8915px" width="25.617" height="25.617" viewBox="-12.8085 -12.8085 25.617 25.617"><circle cx="0" cy="0" r="11.01" fill="none" stroke="#3f4bd6" stroke-width="1.61"/><path d="M-4.13 0.59L-0.98 3.94L4.08 -3.05" fill="none" stroke="#3f4bd6" stroke-width="1.96" stroke-linejoin="round"/></svg>
<div class="b" style="left:1912.5px;top:1120.2px;width:61px;height:61px;border-radius:50%;background:#f6f6fd;"></div>
<svg class="b" style="left:1930.1915px;top:1137.8915px" width="25.617" height="25.617" viewBox="-12.8085 -12.8085 25.617 25.617"><circle cx="0" cy="0" r="11.01" fill="none" stroke="#3f4bd6" stroke-width="1.61"/><path d="M-4.13 0.59L-0.98 3.94L4.08 -3.05" fill="none" stroke="#3f4bd6" stroke-width="1.96" stroke-linejoin="round"/></svg>
<span class="t" style="left:1630.60px;top:1214.49px;font-size:19px;line-height:23px;color:#000;letter-spacing:0.098px;">Small</span>
<div class="b" style="left:1630.4px;top:1253.9px;width:47px;height:47px;border-radius:50%;background:linear-gradient(180deg,#ff4200 0%,#ff2600 36%,#fd0000 62%,#fb0000 100%);"></div>
<svg class="b" style="left:1642.45px;top:1265.95px" width="22.9" height="22.9" viewBox="-11.45 -11.45 22.9 22.9"><circle cx="0" cy="0" r="9.74" fill="none" stroke="#fff" stroke-width="1.42"/><path d="M-3.66 0.52L-0.87 3.48L3.61 -2.70" fill="none" stroke="#fff" stroke-width="1.73" stroke-linejoin="round"/></svg>
<div class="b" style="left:1710.1px;top:1253.9px;width:47px;height:47px;border-radius:50%;background:#3f4bd6;"></div>
<svg class="b" style="left:1722.1499999999999px;top:1265.95px" width="22.9" height="22.9" viewBox="-11.45 -11.45 22.9 22.9"><circle cx="0" cy="0" r="9.74" fill="none" stroke="#fff" stroke-width="1.42"/><path d="M-3.66 0.52L-0.87 3.48L3.61 -2.70" fill="none" stroke="#fff" stroke-width="1.73" stroke-linejoin="round"/></svg>
<div class="b" style="left:1789.5px;top:1252.9px;width:49px;height:49px;border-radius:50%;background:#fff;border:1.3px solid #5a62db;box-sizing:border-box;"></div>
<svg class="b" style="left:1802.55px;top:1265.95px" width="22.9" height="22.9" viewBox="-11.45 -11.45 22.9 22.9"><circle cx="0" cy="0" r="9.74" fill="none" stroke="#3f4bd6" stroke-width="1.42"/><path d="M-3.66 0.52L-0.87 3.48L3.61 -2.70" fill="none" stroke="#3f4bd6" stroke-width="1.73" stroke-linejoin="round"/></svg>
<div class="b" style="left:1872.1px;top:1253.9px;width:47px;height:47px;border-radius:50%;background:#f6f6fd;"></div>
<svg class="b" style="left:1884.1499999999999px;top:1265.95px" width="22.9" height="22.9" viewBox="-11.45 -11.45 22.9 22.9"><circle cx="0" cy="0" r="9.74" fill="none" stroke="#3f4bd6" stroke-width="1.42"/><path d="M-3.66 0.52L-0.87 3.48L3.61 -2.70" fill="none" stroke="#3f4bd6" stroke-width="1.73" stroke-linejoin="round"/></svg>
<span class="t" style="left:1630.60px;top:1334.89px;font-size:19px;line-height:23px;color:#000;letter-spacing:0.077px;">Tiny</span>
</div></body></html>
